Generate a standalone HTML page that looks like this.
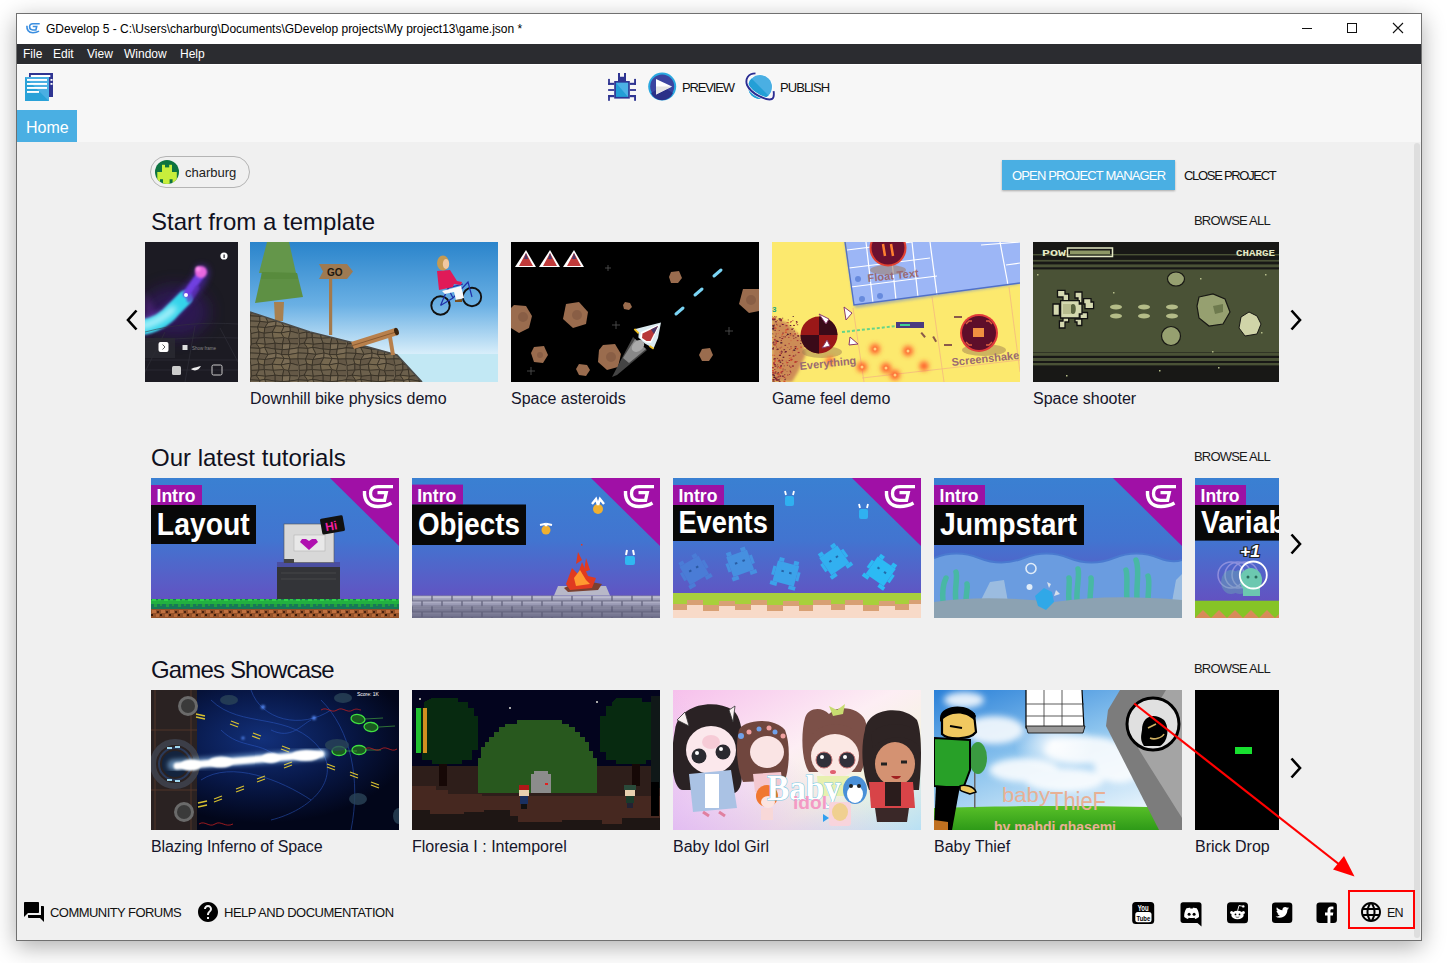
<!DOCTYPE html>
<html><head><meta charset="utf-8">
<style>
*{box-sizing:border-box;margin:0;padding:0}
html,body{width:1454px;height:963px;overflow:hidden;background:#fff;font-family:"Liberation Sans",sans-serif;color:#1a1a2e}
.a{position:absolute}
.t{white-space:nowrap;position:absolute;line-height:1}
.card{position:absolute;overflow:hidden}
.card svg{display:block}
.cap{position:absolute;font-size:16px;white-space:nowrap;color:#15152a;line-height:1}
.h{position:absolute;font-size:24px;white-space:nowrap;color:#101020;line-height:1}
.ba{position:absolute;font-size:13px;letter-spacing:-0.8px;white-space:nowrap;color:#1a1a1a;line-height:1}
.arr{position:absolute}
</style></head><body>
<!-- window frame -->
<div class="a" style="left:16px;top:13px;width:1406px;height:928px;border:1px solid #707070;background:#f0f0f0;box-shadow:0 6px 22px rgba(0,0,0,0.32)"></div>
<!-- title bar -->
<div class="a" style="left:17px;top:14px;width:1404px;height:30px;background:#fff"></div>
<svg class="a" style="left:17px;top:14px" width="30" height="30" viewBox="0 0 30 30"><g transform="translate(9 9) scale(0.45) translate(-211.5 -6.9)" fill="none" stroke="#3a8ee0">
 <path d="M213.5,13 C213,22 217,28.5 227,28.5 C233,28.5 237,27 240.5,25" stroke-width="3.6"/>
 <path d="M242,8.6 L227,8.6 C221,8.6 219.5,12 219.5,15.5 C219.5,20 222,22.3 226.5,22.3 L233.5,22.3 L235.3,14.6 L226.5,14.6" stroke-width="3.5"/>
</g></svg>
<div class="t" style="left:46px;top:23px;font-size:12px;color:#000;letter-spacing:0px">GDevelop 5 - C:\Users\charburg\Documents\GDevelop projects\My project13\game.json *</div>
<div class="a" style="left:1302px;top:28px;width:10px;height:1px;background:#111"></div>
<div class="a" style="left:1347px;top:23px;width:10px;height:10px;border:1px solid #111"></div>
<svg class="a" style="left:1392px;top:22px" width="12" height="12" viewBox="0 0 12 12"><path d="M1,1 L11,11 M11,1 L1,11" stroke="#111" stroke-width="1.1"/></svg>
<!-- menu bar -->
<div class="a" style="left:17px;top:44px;width:1404px;height:20px;background:#2b2c30"></div>
<div class="t" style="left:23px;top:48px;font-size:12px;color:#fff;letter-spacing:0px">File</div>
<div class="t" style="left:53px;top:48px;font-size:12px;color:#fff;letter-spacing:0px">Edit</div>
<div class="t" style="left:87px;top:48px;font-size:12px;color:#fff;letter-spacing:0px">View</div>
<div class="t" style="left:124px;top:48px;font-size:12px;color:#fff;letter-spacing:0px">Window</div>
<div class="t" style="left:180px;top:48px;font-size:12px;color:#fff;letter-spacing:0px">Help</div>
<!-- toolbar -->
<div class="a" style="left:17px;top:64px;width:1404px;height:1px;background:#fff"></div>
<div class="a" style="left:17px;top:65px;width:1404px;height:77px;background:#f7f7f7"></div>
<!-- project manager icon -->
<svg class="a" style="left:24px;top:72px" width="32" height="32" viewBox="0 0 32 32">
 <rect x="5" y="1" width="24" height="24" fill="#2f3592"/>
 <rect x="6.8" y="3" width="19.5" height="2" fill="#fff"/>
 <rect x="26.5" y="7" width="2" height="1.8" fill="#fff"/>
 <rect x="26.5" y="11" width="2" height="1.8" fill="#fff"/>
 <rect x="1" y="5" width="24" height="24" fill="#4aafe3"/>
 <path d="M1,14 L15,29 L1,29 Z M1,5 L25,29 L15,29 L1,14" fill="#239fd6"/>
 <path d="M1,5 L25,29 L1,29 Z" fill="#2aa2d8"/>
 <path d="M1,5 L25,5 L25,29 Z" fill="#4aafe3"/>
 <rect x="3" y="7" width="20" height="1.9" fill="#fff"/>
 <rect x="3" y="11" width="20" height="1.9" fill="#fff"/>
 <rect x="3" y="15" width="20" height="1.9" fill="#fff"/>
 <rect x="3" y="19" width="12" height="1.9" fill="#fff"/>
</svg>
<!-- debug icon -->
<svg class="a" style="left:604px;top:70px" width="36" height="34" viewBox="0 0 36 34">
 <path d="M14,3 H16 V6.8 H20 V3 H22 V11 H14 Z" fill="#2f3592"/>
 <rect x="10.2" y="11" width="15.6" height="17.6" fill="#2f3592"/>
 <path d="M11.9,12.8 H24.1 V26.9 H11.9 Z" fill="#239fd6"/>
 <path d="M11.9,12.8 H24.1 V26.9 Z" fill="#4cb1e5"/>
 <g fill="#2f3592">
  <rect x="4.1" y="12.8" width="6.1" height="2.1"/><rect x="4.1" y="8.9" width="1.8" height="6"/>
  <rect x="4.1" y="19.1" width="6.1" height="1.8"/>
  <rect x="4.1" y="25" width="6.1" height="2.2"/><rect x="4.1" y="25" width="1.8" height="5.8"/>
  <rect x="25.8" y="12.8" width="6.2" height="2.1"/><rect x="30.1" y="8.9" width="1.9" height="6"/>
  <rect x="25.8" y="19.1" width="6.2" height="1.8"/>
  <rect x="25.8" y="25" width="6.2" height="2.2"/><rect x="30.1" y="25" width="1.9" height="5.8"/>
 </g>
</svg>
<!-- preview icon -->
<svg class="a" style="left:646px;top:70px" width="32" height="32" viewBox="0 0 32 32">
 <circle cx="16.2" cy="16.6" r="14" fill="#2aa8e0"/>
 <circle cx="16.2" cy="16.6" r="12" fill="#3b44a0"/>
 <path d="M5,23 A12,12 0 0 0 27,23 L16.2,16.6 Z" fill="#2b3188"/>
 <path d="M10,8.9 L26,16.5 L10,24.6 Z" fill="#fff"/>
 <path d="M10,16.5 L26,16.5 L10,24.6 Z" fill="#e4e4e4"/>
</svg>
<div class="t" style="left:682px;top:81px;font-size:13px;color:#111;letter-spacing:-1.15px">PREVIEW</div>
<!-- publish icon -->
<svg class="a" style="left:740px;top:70px" width="40" height="34" viewBox="0 0 40 34">
 <circle cx="20.1" cy="17" r="12.6" fill="#fff"/>
 <circle cx="20.1" cy="17" r="11.9" fill="#4aafe3"/>
 <path d="M11.6,8.6 A11.9,11.9 0 0 0 28.5,25.4 Z" fill="#239fd6"/>
 <path d="M15.5,3.4 C8,3.6 5,9 7,15 C11,24 27,31 32,29 C34.5,27.5 34,24 33.6,21.2" fill="none" stroke="#fff" stroke-width="3.2"/>
 <path d="M15.5,3.4 C8,3.6 5,9 7,15 C11,24 27,31 32,29 C34.5,27.5 34,24 33.6,21.2" fill="none" stroke="#2b2d92" stroke-width="1.9"/>
</svg>
<div class="t" style="left:780px;top:81px;font-size:13px;color:#111;letter-spacing:-0.9px">PUBLISH</div>
<!-- home tab -->
<div class="a" style="left:17px;top:110px;width:60px;height:32px;background:#4aafe3"></div>
<div class="t" style="left:26px;top:120px;font-size:16px;color:#fff">Home</div>
<!-- content -->
<div class="a" style="left:17px;top:142px;width:1404px;height:798px;background:#f0f0f0"></div>
<div class="a" style="left:1414px;top:143px;width:6px;height:795px;background:#dedede;border-radius:3px"></div>
<!-- chip -->
<div class="a" style="left:150px;top:156px;width:100px;height:32px;border:1px solid #b4b4b4;border-radius:16px"></div>
<svg class="a" style="left:155px;top:160px" width="24" height="24" viewBox="0 0 24 24">
 <defs><clipPath id="avc"><circle cx="12" cy="12" r="12"/></clipPath></defs>
 <circle cx="12" cy="12" r="12" fill="#0e7340"/>
 <g clip-path="url(#avc)" fill="#c8ee3c">
  <rect x="7" y="4.8" width="3" height="4"/><rect x="14.2" y="4.8" width="2.8" height="4"/>
  <rect x="7" y="7.4" width="10" height="5"/><rect x="2.3" y="12" width="19.5" height="7.2"/>
  <rect x="2.3" y="19" width="2.7" height="6"/><rect x="8" y="19" width="6.6" height="6"/><rect x="17.6" y="19" width="4.2" height="6"/>
 </g>
</svg>
<div class="t" style="left:185px;top:166px;font-size:13px;color:#222">charburg</div>
<!-- buttons -->
<div class="a" style="left:1002px;top:160px;width:173px;height:30px;background:#4aafe3;box-shadow:0 1px 2px rgba(0,0,0,0.3)"></div>
<div class="t" style="left:1012px;top:169px;font-size:13px;letter-spacing:-0.85px;color:#fff">OPEN PROJECT MANAGER</div>
<div class="t" style="left:1184px;top:169px;font-size:13px;letter-spacing:-1.3px;color:#111">CLOSE PROJECT</div>
<!-- headings -->
<div class="h" style="left:151px;top:210px">Start from a template</div>
<div class="ba" style="left:1194px;top:214px">BROWSE ALL</div>
<div class="h" style="left:151px;top:446px">Our latest tutorials</div>
<div class="ba" style="left:1194px;top:450px">BROWSE ALL</div>
<div class="h" style="left:151px;top:658px;letter-spacing:-0.85px">Games Showcase</div>
<div class="ba" style="left:1194px;top:662px">BROWSE ALL</div>
<!-- carousel arrows -->
<svg class="arr" style="left:124px;top:308px" width="16" height="24" viewBox="0 0 16 24"><path d="M12.5,2.5 L4,12 L12.5,21.5" fill="none" stroke="#000" stroke-width="2.6"/></svg>
<svg class="arr" style="left:1288px;top:308px" width="16" height="24" viewBox="0 0 16 24"><path d="M3.5,2.5 L12,12 L3.5,21.5" fill="none" stroke="#000" stroke-width="2.6"/></svg>
<svg class="arr" style="left:1288px;top:532px" width="16" height="24" viewBox="0 0 16 24"><path d="M3.5,2.5 L12,12 L3.5,21.5" fill="none" stroke="#000" stroke-width="2.6"/></svg>
<svg class="arr" style="left:1288px;top:756px" width="16" height="24" viewBox="0 0 16 24"><path d="M3.5,2.5 L12,12 L3.5,21.5" fill="none" stroke="#000" stroke-width="2.6"/></svg>
<!-- template card 0 (partial) -->
<div class="card" style="left:145px;top:242px;width:93px;height:140px;background:#1b1a22">
<svg width="93" height="140" viewBox="0 0 93 140">
 <defs>
  <filter id="bl3" x="-50%" y="-50%" width="200%" height="200%"><feGaussianBlur stdDeviation="3"/></filter>
  <filter id="bl6" x="-50%" y="-50%" width="200%" height="200%"><feGaussianBlur stdDeviation="8"/></filter>
  <filter id="bl1" x="-50%" y="-50%" width="200%" height="200%"><feGaussianBlur stdDeviation="1.2"/></filter>
 </defs>
 <rect width="93" height="140" fill="#1c1b23"/>
 <ellipse cx="30" cy="70" rx="34" ry="26" fill="#3a1478" opacity="0.55" filter="url(#bl6)"/>
 <path d="M0,50 L12,72 L0,100 Z" fill="#6a2aa0" opacity="0.45" filter="url(#bl3)"/>
 <g stroke-linecap="round" fill="none">
  <path d="M-4,84 C10,82 22,74 30,66 C36,60 42,52 50,44 C54,40 56,36 57,30" stroke="#5a2ad0" stroke-width="14" opacity="0.55" filter="url(#bl3)"/>
  <path d="M-6,86 C8,84 20,78 28,68 C33,63 36,60 40,56" stroke="#34d4ea" stroke-width="15" filter="url(#bl1)"/>
  <path d="M-2,84 C10,81 20,75 28,67" stroke="#c8f8ff" stroke-width="6" filter="url(#bl3)"/>
  <path d="M42,52 C46,46 50,40 54,35" stroke="#7040e0" stroke-width="8" filter="url(#bl1)"/>
  <path d="M44,58 C48,54 50,50 52,46" stroke="#6030c0" stroke-width="5" opacity="0.7" filter="url(#bl1)"/>
 </g>
 <ellipse cx="56" cy="30" rx="6" ry="6" fill="#e868e0" filter="url(#bl1)"/>
 <circle cx="53" cy="27" r="2.5" fill="#ff90f0" filter="url(#bl1)"/>
 <circle cx="41" cy="53" r="2" fill="#fff"/>
 <circle cx="79" cy="14" r="3.6" fill="#fff"/>
 <rect x="78.5" y="12.5" width="1.2" height="3.5" fill="#1c1b23"/>
 <g stroke="#34343e" stroke-width="0.7" fill="none" opacity="0.8">
  <path d="M0,90 C30,82 60,80 93,82"/><path d="M0,100 C30,96 60,95 93,96"/><path d="M0,118 L93,118"/><path d="M0,128 L93,128"/>
  <path d="M20,90 L-5,140"/><path d="M50,84 L40,140"/><path d="M75,86 L93,120"/>
 </g>
 <rect x="0" y="96" width="30" height="20" fill="#2a2a32" opacity="0.8"/>
 <rect x="13.5" y="100" width="10" height="10" rx="2" fill="#fff"/>
 <path d="M17.5,102.5 L20,105 L17.5,107.5" stroke="#333" stroke-width="0.8" fill="none"/>
 <rect x="37.5" y="103" width="5" height="5" fill="#ddd"/>
 <text x="47" y="107.5" font-size="4.5" fill="#888" font-family="Liberation Sans">Show frame</text>
 <rect x="27" y="124" width="9" height="9" rx="1.5" fill="#ccc"/>
 <path d="M46,127 C50,130 54,128 56,124 C53,125 50,125 46,127 Z" fill="#eee"/>
 <rect x="67" y="123" width="10" height="10" rx="1.5" fill="none" stroke="#ccc" stroke-width="1"/>
</svg></div>

<!-- template card 1: downhill bike -->
<div class="card" style="left:250px;top:242px;width:248px;height:140px">
<svg width="248" height="140" viewBox="0 0 248 140">
 <defs>
  <linearGradient id="sky1" x1="0" y1="0" x2="0" y2="1"><stop offset="0" stop-color="#2a84cb"/><stop offset="0.45" stop-color="#6ab0e4"/><stop offset="0.8" stop-color="#d8eefa"/><stop offset="1" stop-color="#e8f6fc"/></linearGradient>
  <pattern id="rock" width="48" height="32" patternUnits="userSpaceOnUse"><rect width="48" height="32" fill="#6a5e4c"/><path d="M1.2,0.5 L8.9,0.1 L6.2,5.2 L1.6,6.1 Z" fill="#645846" stroke="#2e281e" stroke-width="0.7"/><path d="M1.6,6.1 L6.2,5.2 L9.8,10.4 L0.1,9.9 Z" fill="#645846" stroke="#2e281e" stroke-width="0.7"/><path d="M0.1,9.9 L9.8,10.4 L10.0,15.4 L0.1,15.0 Z" fill="#6c604c" stroke="#2e281e" stroke-width="0.7"/><path d="M0.1,15.0 L10.0,15.4 L7.6,21.1 L-0.2,20.9 Z" fill="#6c604c" stroke="#2e281e" stroke-width="0.7"/><path d="M-0.2,20.9 L7.6,21.1 L8.9,25.9 L1.1,27.6 Z" fill="#6c604c" stroke="#2e281e" stroke-width="0.7"/><path d="M1.1,27.6 L8.9,25.9 L8.9,31.9 L1.2,32.3 Z" fill="#6c604c" stroke="#2e281e" stroke-width="0.7"/><path d="M8.9,0.1 L14.3,-0.4 L15.4,6.3 L6.2,5.2 Z" fill="#6c604c" stroke="#2e281e" stroke-width="0.7"/><path d="M6.2,5.2 L15.4,6.3 L14.7,9.4 L9.8,10.4 Z" fill="#76684f" stroke="#2e281e" stroke-width="0.7"/><path d="M9.8,10.4 L14.7,9.4 L18.2,16.4 L10.0,15.4 Z" fill="#7a6c55" stroke="#2e281e" stroke-width="0.7"/><path d="M10.0,15.4 L18.2,16.4 L14.9,21.5 L7.6,21.1 Z" fill="#645846" stroke="#2e281e" stroke-width="0.7"/><path d="M7.6,21.1 L14.9,21.5 L14.2,27.3 L8.9,25.9 Z" fill="#76684f" stroke="#2e281e" stroke-width="0.7"/><path d="M8.9,25.9 L14.2,27.3 L14.3,31.4 L8.9,31.9 Z" fill="#645846" stroke="#2e281e" stroke-width="0.7"/><path d="M14.3,-0.4 L23.3,0.3 L25.2,5.2 L15.4,6.3 Z" fill="#6c604c" stroke="#2e281e" stroke-width="0.7"/><path d="M15.4,6.3 L25.2,5.2 L25.2,11.1 L14.7,9.4 Z" fill="#645846" stroke="#2e281e" stroke-width="0.7"/><path d="M14.7,9.4 L25.2,11.1 L26.2,15.1 L18.2,16.4 Z" fill="#6c604c" stroke="#2e281e" stroke-width="0.7"/><path d="M18.2,16.4 L26.2,15.1 L25.7,19.9 L14.9,21.5 Z" fill="#7a6c55" stroke="#2e281e" stroke-width="0.7"/><path d="M14.9,21.5 L25.7,19.9 L22.3,26.2 L14.2,27.3 Z" fill="#645846" stroke="#2e281e" stroke-width="0.7"/><path d="M14.2,27.3 L22.3,26.2 L23.3,32.1 L14.3,31.4 Z" fill="#6c604c" stroke="#2e281e" stroke-width="0.7"/><path d="M23.3,0.3 L33.8,-0.4 L32.6,5.9 L25.2,5.2 Z" fill="#6c604c" stroke="#2e281e" stroke-width="0.7"/><path d="M25.2,5.2 L32.6,5.9 L32.3,11.6 L25.2,11.1 Z" fill="#645846" stroke="#2e281e" stroke-width="0.7"/><path d="M25.2,11.1 L32.3,11.6 L31.5,16.5 L26.2,15.1 Z" fill="#6c604c" stroke="#2e281e" stroke-width="0.7"/><path d="M26.2,15.1 L31.5,16.5 L34.1,20.4 L25.7,19.9 Z" fill="#7a6c55" stroke="#2e281e" stroke-width="0.7"/><path d="M25.7,19.9 L34.1,20.4 L31.2,26.9 L22.3,26.2 Z" fill="#76684f" stroke="#2e281e" stroke-width="0.7"/><path d="M22.3,26.2 L31.2,26.9 L33.8,31.4 L23.3,32.1 Z" fill="#76684f" stroke="#2e281e" stroke-width="0.7"/><path d="M33.8,-0.4 L38.6,0.7 L40.2,5.6 L32.6,5.9 Z" fill="#645846" stroke="#2e281e" stroke-width="0.7"/><path d="M32.6,5.9 L40.2,5.6 L39.3,11.2 L32.3,11.6 Z" fill="#7a6c55" stroke="#2e281e" stroke-width="0.7"/><path d="M32.3,11.6 L39.3,11.2 L38.5,16.7 L31.5,16.5 Z" fill="#645846" stroke="#2e281e" stroke-width="0.7"/><path d="M31.5,16.5 L38.5,16.7 L40.0,21.1 L34.1,20.4 Z" fill="#76684f" stroke="#2e281e" stroke-width="0.7"/><path d="M34.1,20.4 L40.0,21.1 L40.4,25.2 L31.2,26.9 Z" fill="#7a6c55" stroke="#2e281e" stroke-width="0.7"/><path d="M31.2,26.9 L40.4,25.2 L38.6,32.5 L33.8,31.4 Z" fill="#76684f" stroke="#2e281e" stroke-width="0.7"/><path d="M38.6,0.7 L49.2,0.5 L49.6,6.1 L40.2,5.6 Z" fill="#645846" stroke="#2e281e" stroke-width="0.7"/><path d="M40.2,5.6 L49.6,6.1 L48.1,9.9 L39.3,11.2 Z" fill="#6c604c" stroke="#2e281e" stroke-width="0.7"/><path d="M39.3,11.2 L48.1,9.9 L48.1,15.0 L38.5,16.7 Z" fill="#7a6c55" stroke="#2e281e" stroke-width="0.7"/><path d="M38.5,16.7 L48.1,15.0 L47.8,20.9 L40.0,21.1 Z" fill="#76684f" stroke="#2e281e" stroke-width="0.7"/><path d="M40.0,21.1 L47.8,20.9 L49.1,27.6 L40.4,25.2 Z" fill="#645846" stroke="#2e281e" stroke-width="0.7"/><path d="M40.4,25.2 L49.1,27.6 L49.2,32.3 L38.6,32.5 Z" fill="#6c604c" stroke="#2e281e" stroke-width="0.7"/></pattern>
 </defs>
 <rect width="248" height="140" fill="url(#sky1)"/>
 <rect x="140" y="112" width="108" height="28" fill="#c2e8f4"/>
 <!-- tree -->
 <path d="M24,60 L34,60 L33,79 L25,79 Z" fill="#a88050"/>
 <path d="M17,0 L39,0 L46,31 L9,31 Z" fill="#64964a"/>
 <path d="M12,30 L47,31 L53,55 L5,61 Z" fill="#5e9044"/>
 <path d="M12,30 L47,31 L48,37 L11,37 Z" fill="#558838" opacity="0.6"/>
 <!-- ground -->
 <path d="M0,70 L60,90 L100,100 L147,113 L172,140 L0,140 Z" fill="url(#rock)"/>
 <path d="M0,70 L60,90 L100,100 L147,113 L172,140" stroke="#4a4a48" stroke-width="1.5" fill="none"/>
 <!-- sign -->
 <rect x="79" y="36" width="3.2" height="57" fill="#a47a4c"/>
 <path d="M69,22 L97,22 L103,29.5 L97,37 L69,37 L73,29.5 Z" fill="#9e7a52"/>
 <text x="77" y="34" font-size="10" font-weight="bold" fill="#201810" font-family="Liberation Sans">GO</text>
 <!-- log -->
 <path d="M101,100 L145,86 L148,93 L104,107 Z" fill="#b8804c"/>
 <path d="M101,104 L146,90" stroke="#8a5a30" stroke-width="1" />
 <ellipse cx="146.5" cy="89.5" rx="2.2" ry="3.8" fill="#3a2410" transform="rotate(-18 146.5 89.5)"/>
 <path d="M138,95 L142,95 L145,113 L141,113 Z" fill="#b8804c"/>
 <!-- bike -->
 <g fill="none" stroke="#111" stroke-width="1.9">
  <circle cx="190.5" cy="63.5" r="9.2"/><circle cx="222" cy="55" r="9.2"/>
 </g>
 <g fill="none" stroke="#2030a8" stroke-width="1.2">
  <path d="M190.5,63.5 L203,56 L218,40 L222,55 M203,56 L198,46 L213,42 M190.5,63.5 L198,46"/>
 </g>
 <path d="M192,49 L211,44 L214,56 L206,58 L204,50 L195,52 Z" fill="#fafafa"/>
 <path d="M187,29 L200,28 L207,39 L212,40 L211,43 L204,42 L203,45 L189,48 Z" fill="#e01a58"/>
 <path d="M205,58 L212,57 L212,60 L205,60 Z" fill="#7a5020"/>
 <ellipse cx="193" cy="21" rx="6" ry="7.5" fill="#c49a52"/>
 <ellipse cx="196" cy="22" rx="3.2" ry="5" fill="#f0c8a0"/>
</svg></div>

<!-- template card 2: space asteroids -->
<div class="card" style="left:511px;top:242px;width:248px;height:140px;background:#000">
<svg width="248" height="140" viewBox="0 0 248 140">
 <rect width="248" height="140" fill="#000"/>
 <g fill="#9a6c4e">
  <path d="M3,63 L15,64 L21,74 L18,86 L8,91 L0,86 L0,66 Z"/>
  <path d="M55,62 L68,60 L77,70 L75,82 L62,86 L52,77 Z"/>
  <path d="M23,105 L33,104 L37,113 L32,121 L23,120 L20,111 Z"/>
  <path d="M68,122 L76,123 L79,128 L75,134 L68,133 L65,127 Z"/>
  <path d="M92,103 L104,102 L110,112 L107,125 L96,128 L87,120 L88,108 Z"/>
  <path d="M114,60 L119,61 L121,65 L118,68 L113,67 L112,63 Z"/>
  <path d="M160,30 L168,29 L171,36 L167,41 L160,41 L158,35 Z"/>
  <path d="M232,47 L248,47 L248,69 L238,71 L228,62 Z"/>
  <path d="M191,107 L199,106 L202,113 L198,119 L191,119 L188,113 Z"/>
 </g>
 <g fill="#7e5640" opacity="0.6">
  <circle cx="12" cy="75" r="5"/><circle cx="66" cy="73" r="5"/><circle cx="100" cy="115" r="5"/><circle cx="240" cy="58" r="5"/><circle cx="29" cy="113" r="3"/>
 </g>
 <g stroke="#555" stroke-width="0.8">
  <path d="M94,26 L100,26 M97,23 L97,29"/><path d="M101,83 L109,83 M105,79 L105,87"/><path d="M214,89 L222,89 M218,85 L218,93"/><path d="M16,129 L24,129 M20,125 L20,133"/>
 </g>
 <g>
  <path d="M15,8 L25,25 L4,25 Z" fill="#fff"/><path d="M15,11 L22,24 L8,24 Z" fill="#c03a3a"/><path d="M15,11 L17,17 L13,17 Z" fill="#4a3868"/>
  <path d="M39,8 L49,25 L28,25 Z" fill="#fff"/><path d="M39,11 L46,24 L32,24 Z" fill="#c03a3a"/><path d="M39,11 L41,17 L37,17 Z" fill="#4a3868"/>
  <path d="M63,8 L73,25 L52,25 Z" fill="#fff"/><path d="M63,11 L70,24 L56,24 Z" fill="#c03a3a"/><path d="M63,11 L65,17 L61,17 Z" fill="#4a3868"/>
 </g>
 <g stroke="#7ad4f4" stroke-width="3" stroke-linecap="round">
  <path d="M165,72 L172,66"/><path d="M184,53 L191,47"/><path d="M203,34 L210,28"/>
 </g>
 <path d="M122,95 L136,108 L106,133 L101,135 Z" fill="#444"/>
 <path d="M124,97 L135,107 L118,121 L112,116 Z" fill="#888"/>
 <ellipse cx="127" cy="104" rx="7" ry="5" transform="rotate(-40 127 104)" fill="#aaa"/>
 <path d="M150,80.4 L123.4,87.3 L127.7,91.3 L127.4,95.6 L133.9,101.5 L142.6,106.5 L147,96 Z" fill="#dbeaf0"/>
 <path d="M149,82 L130,90 L129,96 L135,100.5 L140,101 Z" fill="#fff"/>
 <path d="M147,84 L131.5,91.5 L131,96 L135.5,99 L139.5,99 Z" fill="#b83838"/>
 <path d="M147,84 L140,87.5 L143,92 Z" fill="#4a3868"/>
 <path d="M123.4,87 L127.7,91.3 M138.5,104 L142.6,106.8" stroke="#f0c020" stroke-width="1.8"/>
</svg></div>

<!-- template card 3: game feel -->
<div class="card" style="left:772px;top:242px;width:248px;height:140px;background:#fbe86c">
<svg width="248" height="140" viewBox="0 0 248 140">
 <defs>
  <filter id="gfb" x="-50%" y="-50%" width="200%" height="200%"><feGaussianBlur stdDeviation="1.6"/></filter>
  <filter id="gfb2" x="-50%" y="-50%" width="200%" height="200%"><feGaussianBlur stdDeviation="2.5"/></filter>
 </defs>
 <rect width="248" height="140" fill="#fce96e"/>
 <g stroke="#f4b880" stroke-width="0.8" fill="none">
  <path d="M81,66 L92,140"/><path d="M160,55 L172,140"/><path d="M237,45 L248,130"/><path d="M90,136 L248,118"/>
 </g>
 <path d="M73,0 L248,0 L248,42 L83,66 Z" fill="#5a7ad8" opacity="0.5" filter="url(#gfb)"/>
 <path d="M74,0 L248,0 L248,41 L82,63 Z" fill="#9cb6f6"/>
 <g stroke="#fff" stroke-width="1.2" fill="none">
  <path d="M75,8 L140,0"/><path d="M77,26 L158,16"/><path d="M79,45 L165,34"/><path d="M209,3 L248,0"/><path d="M234,23 L248,21"/>
  <path d="M94,0 L101,61"/><path d="M118,0 L124,58"/><path d="M140,0 L146,55"/><path d="M158,0 L165,53"/><path d="M228,0 L236,43"/>
 </g>
 <path d="M73,0 L82,63 L248,41" stroke="#5070c8" stroke-width="1.4" fill="none"/>
 <g fill="#5a80d8" opacity="0.8"><circle cx="86" cy="37" r="3"/><circle cx="90" cy="57" r="3"/><circle cx="108" cy="54" r="3"/></g>
 <!-- particles left -->
 <path d="M0,76 L14,80 L30,96 L34,112 L26,130 L20,140 L0,140 Z" fill="#a03040" opacity="0.5" filter="url(#gfb)"/>
 <g opacity="0.95"><rect x="12.8" y="89.7" width="2.0" height="1.2" fill="#d84a30"/><rect x="15.4" y="105.3" width="0.8" height="0.5" fill="#8a2030"/><rect x="2.9" y="129.3" width="1.0" height="0.7" fill="#6a1434"/><rect x="10.0" y="121.3" width="1.4" height="0.9" fill="#8a2030"/><rect x="1.9" y="116.2" width="1.9" height="1.2" fill="#6a1434"/><rect x="20.4" y="108.5" width="1.0" height="0.6" fill="#a82a34"/><rect x="0.2" y="137.2" width="1.9" height="1.2" fill="#a82a34"/><rect x="15.1" y="91.8" width="1.7" height="1.1" fill="#3e0c2a"/><rect x="4.3" y="134.8" width="1.4" height="0.9" fill="#8a2030"/><rect x="12.8" y="135.7" width="0.8" height="0.5" fill="#a82a34"/><rect x="4.8" y="106.7" width="1.8" height="1.1" fill="#3e0c2a"/><rect x="5.5" y="130.4" width="1.5" height="1.0" fill="#3e0c2a"/><rect x="8.7" y="109.3" width="2.0" height="1.2" fill="#6a1434"/><rect x="22.6" y="119.0" width="2.1" height="1.3" fill="#d84a30"/><rect x="2.0" y="118.3" width="2.0" height="1.3" fill="#d84a30"/><rect x="7.5" y="133.7" width="1.6" height="1.0" fill="#6a1434"/><rect x="2.1" y="139.2" width="0.9" height="0.6" fill="#a82a34"/><rect x="18.2" y="130.4" width="1.2" height="0.8" fill="#a82a34"/><rect x="20.2" y="78.4" width="1.2" height="0.7" fill="#a82a34"/><rect x="17.9" y="124.7" width="1.6" height="1.0" fill="#a82a34"/><rect x="5.6" y="124.3" width="1.2" height="0.8" fill="#8a2030"/><rect x="17.0" y="132.1" width="1.1" height="0.7" fill="#8a2030"/><rect x="0.0" y="76.4" width="1.6" height="1.0" fill="#a82a34"/><rect x="2.3" y="76.1" width="1.2" height="0.7" fill="#3e0c2a"/><rect x="18.4" y="91.4" width="1.2" height="0.8" fill="#d84a30"/><rect x="12.4" y="137.3" width="1.3" height="0.8" fill="#3e0c2a"/><rect x="4.7" y="131.4" width="1.7" height="1.0" fill="#8a2030"/><rect x="23.9" y="80.8" width="1.1" height="0.7" fill="#8a2030"/><rect x="16.8" y="115.9" width="1.4" height="0.8" fill="#d84a30"/><rect x="5.8" y="91.0" width="0.8" height="0.5" fill="#d84a30"/><rect x="16.4" y="101.4" width="1.3" height="0.8" fill="#a82a34"/><rect x="1.7" y="112.9" width="1.4" height="0.9" fill="#d84a30"/><rect x="5.8" y="118.8" width="1.7" height="1.1" fill="#d84a30"/><rect x="0.4" y="75.5" width="2.0" height="1.3" fill="#a82a34"/><rect x="10.2" y="90.6" width="1.6" height="1.0" fill="#8a2030"/><rect x="2.6" y="85.7" width="1.9" height="1.2" fill="#d84a30"/><rect x="22.2" y="91.4" width="1.8" height="1.1" fill="#a82a34"/><rect x="10.0" y="75.8" width="1.2" height="0.7" fill="#6a1434"/><rect x="21.7" y="88.7" width="1.2" height="0.8" fill="#6a1434"/><rect x="13.8" y="118.8" width="0.9" height="0.6" fill="#a82a34"/><rect x="7.2" y="95.2" width="1.4" height="0.9" fill="#6a1434"/><rect x="1.5" y="130.5" width="1.7" height="1.1" fill="#d84a30"/><rect x="13.3" y="88.4" width="1.1" height="0.7" fill="#d84a30"/><rect x="10.5" y="82.0" width="1.2" height="0.8" fill="#6a1434"/><rect x="8.8" y="129.2" width="1.2" height="0.8" fill="#d84a30"/><rect x="0.6" y="128.6" width="1.2" height="0.8" fill="#8a2030"/><rect x="4.6" y="82.6" width="1.4" height="0.9" fill="#d84a30"/><rect x="4.8" y="115.9" width="1.3" height="0.8" fill="#8a2030"/><rect x="1.2" y="134.8" width="1.4" height="0.9" fill="#a82a34"/><rect x="9.9" y="128.9" width="1.4" height="0.8" fill="#8a2030"/><rect x="13.3" y="136.7" width="0.8" height="0.5" fill="#6a1434"/><rect x="22.6" y="104.1" width="2.0" height="1.3" fill="#8a2030"/><rect x="25.7" y="109.9" width="1.9" height="1.2" fill="#a82a34"/><rect x="0.7" y="138.1" width="0.9" height="0.5" fill="#6a1434"/><rect x="9.9" y="133.6" width="1.9" height="1.2" fill="#6a1434"/><rect x="7.7" y="133.4" width="1.4" height="0.9" fill="#a82a34"/><rect x="9.8" y="82.0" width="1.6" height="1.0" fill="#6a1434"/><rect x="9.0" y="108.6" width="0.9" height="0.6" fill="#8a2030"/><rect x="24.8" y="82.3" width="1.4" height="0.9" fill="#8a2030"/><rect x="4.9" y="125.6" width="1.0" height="0.6" fill="#6a1434"/><rect x="0.9" y="132.6" width="1.8" height="1.1" fill="#6a1434"/><rect x="11.7" y="134.8" width="1.4" height="0.9" fill="#a82a34"/><rect x="8.1" y="111.7" width="1.1" height="0.7" fill="#d84a30"/><rect x="11.0" y="114.8" width="1.4" height="0.9" fill="#a82a34"/><rect x="0.0" y="125.2" width="1.8" height="1.1" fill="#a82a34"/><rect x="0.3" y="77.0" width="2.0" height="1.3" fill="#3e0c2a"/><rect x="0.6" y="130.4" width="1.4" height="0.9" fill="#8a2030"/><rect x="0.7" y="84.4" width="1.6" height="1.0" fill="#3e0c2a"/><rect x="6.9" y="112.7" width="2.1" height="1.3" fill="#6a1434"/><rect x="1.9" y="102.3" width="1.7" height="1.1" fill="#a82a34"/><rect x="1.0" y="99.1" width="0.9" height="0.5" fill="#6a1434"/><rect x="18.3" y="104.4" width="1.3" height="0.8" fill="#8a2030"/><rect x="10.6" y="126.9" width="0.9" height="0.5" fill="#3e0c2a"/><rect x="18.5" y="115.4" width="1.3" height="0.8" fill="#d84a30"/><rect x="8.3" y="119.8" width="1.1" height="0.7" fill="#6a1434"/><rect x="14.9" y="91.8" width="1.1" height="0.7" fill="#3e0c2a"/><rect x="0.2" y="82.6" width="1.3" height="0.8" fill="#d84a30"/><rect x="12.1" y="133.3" width="1.0" height="0.6" fill="#d84a30"/><rect x="22.6" y="119.6" width="1.8" height="1.1" fill="#8a2030"/><rect x="16.6" y="118.1" width="1.5" height="0.9" fill="#8a2030"/><rect x="12.6" y="127.6" width="1.0" height="0.6" fill="#3e0c2a"/><rect x="0.3" y="125.1" width="1.5" height="1.0" fill="#a82a34"/><rect x="6.6" y="117.5" width="1.2" height="0.8" fill="#a82a34"/><rect x="0.1" y="130.3" width="1.7" height="1.0" fill="#a82a34"/><rect x="17.9" y="129.2" width="1.2" height="0.7" fill="#8a2030"/><rect x="24.2" y="79.9" width="1.5" height="0.9" fill="#8a2030"/><rect x="1.0" y="121.2" width="2.0" height="1.2" fill="#a82a34"/><rect x="4.8" y="78.0" width="1.0" height="0.6" fill="#8a2030"/><rect x="23.9" y="79.1" width="1.4" height="0.9" fill="#6a1434"/><rect x="22.4" y="120.2" width="1.3" height="0.8" fill="#d84a30"/><rect x="8.3" y="100.2" width="2.0" height="1.3" fill="#3e0c2a"/><rect x="4.7" y="98.8" width="1.9" height="1.2" fill="#3e0c2a"/><rect x="4.1" y="137.8" width="1.8" height="1.1" fill="#8a2030"/><rect x="10.1" y="118.5" width="1.0" height="0.6" fill="#3e0c2a"/><rect x="30.2" y="100.5" width="0.9" height="0.6" fill="#6a1434"/><rect x="19.9" y="123.4" width="2.0" height="1.3" fill="#8a2030"/><rect x="23.1" y="112.7" width="1.1" height="0.7" fill="#6a1434"/><rect x="13.5" y="87.1" width="2.0" height="1.2" fill="#d84a30"/><rect x="7.8" y="130.2" width="1.7" height="1.0" fill="#d84a30"/><rect x="8.9" y="130.4" width="1.5" height="1.0" fill="#8a2030"/><rect x="3.7" y="91.6" width="1.1" height="0.7" fill="#a82a34"/><rect x="2.1" y="127.1" width="1.3" height="0.8" fill="#8a2030"/><rect x="23.2" y="95.3" width="1.3" height="0.8" fill="#6a1434"/><rect x="14.9" y="120.0" width="1.4" height="0.9" fill="#6a1434"/><rect x="14.6" y="129.1" width="0.8" height="0.5" fill="#8a2030"/><rect x="0.3" y="139.5" width="1.8" height="1.1" fill="#3e0c2a"/><rect x="0.2" y="132.2" width="1.9" height="1.2" fill="#6a1434"/><rect x="18.5" y="116.8" width="2.0" height="1.3" fill="#a82a34"/><rect x="2.5" y="130.4" width="1.8" height="1.1" fill="#6a1434"/><rect x="13.5" y="83.1" width="2.0" height="1.2" fill="#a82a34"/><rect x="25.1" y="90.8" width="1.0" height="0.6" fill="#d84a30"/><rect x="17.9" y="80.0" width="0.9" height="0.6" fill="#a82a34"/><rect x="3.4" y="129.0" width="1.4" height="0.9" fill="#d84a30"/><rect x="5.0" y="122.5" width="1.2" height="0.8" fill="#a82a34"/><rect x="12.5" y="102.8" width="1.6" height="1.0" fill="#6a1434"/><rect x="8.4" y="123.0" width="1.5" height="0.9" fill="#6a1434"/><rect x="4.2" y="81.9" width="0.9" height="0.6" fill="#3e0c2a"/><rect x="15.0" y="132.6" width="1.5" height="0.9" fill="#a82a34"/><rect x="14.1" y="120.2" width="1.8" height="1.1" fill="#d84a30"/><rect x="18.6" y="93.5" width="0.9" height="0.6" fill="#d84a30"/><rect x="3.3" y="136.3" width="1.5" height="0.9" fill="#8a2030"/><rect x="9.4" y="81.5" width="0.9" height="0.5" fill="#d84a30"/><rect x="20.6" y="93.4" width="1.6" height="1.0" fill="#6a1434"/><rect x="1.6" y="122.2" width="1.9" height="1.2" fill="#d84a30"/><rect x="1.4" y="117.3" width="1.0" height="0.6" fill="#8a2030"/><rect x="21.2" y="95.9" width="1.3" height="0.8" fill="#8a2030"/><rect x="3.1" y="93.8" width="1.2" height="0.7" fill="#3e0c2a"/><rect x="0.7" y="85.6" width="1.8" height="1.1" fill="#6a1434"/><rect x="19.9" y="109.8" width="0.9" height="0.6" fill="#d84a30"/><rect x="0.5" y="91.9" width="0.9" height="0.5" fill="#6a1434"/><rect x="4.5" y="107.3" width="1.3" height="0.8" fill="#8a2030"/><rect x="9.4" y="96.0" width="1.8" height="1.1" fill="#8a2030"/><rect x="8.9" y="78.6" width="1.0" height="0.6" fill="#a82a34"/><rect x="16.7" y="112.9" width="1.8" height="1.1" fill="#8a2030"/><rect x="2.2" y="122.0" width="1.5" height="1.0" fill="#6a1434"/><rect x="6.8" y="118.2" width="1.6" height="1.0" fill="#6a1434"/><rect x="7.3" y="83.7" width="1.5" height="0.9" fill="#6a1434"/><rect x="2.5" y="85.2" width="1.3" height="0.8" fill="#d84a30"/><rect x="25.3" y="93.3" width="1.9" height="1.2" fill="#3e0c2a"/><rect x="3.9" y="136.7" width="2.0" height="1.2" fill="#8a2030"/><rect x="12.3" y="94.4" width="1.7" height="1.0" fill="#8a2030"/><rect x="26.2" y="93.8" width="0.8" height="0.5" fill="#3e0c2a"/><rect x="14.9" y="86.6" width="1.8" height="1.1" fill="#a82a34"/><rect x="9.5" y="117.7" width="1.6" height="1.0" fill="#8a2030"/><rect x="20.2" y="87.1" width="0.8" height="0.5" fill="#6a1434"/><rect x="17.3" y="107.0" width="0.9" height="0.6" fill="#3e0c2a"/><rect x="17.7" y="92.7" width="1.0" height="0.6" fill="#6a1434"/><rect x="10.7" y="126.3" width="0.8" height="0.5" fill="#a82a34"/><rect x="10.6" y="114.8" width="1.5" height="0.9" fill="#3e0c2a"/><rect x="3.2" y="135.4" width="1.7" height="1.1" fill="#d84a30"/><rect x="21.1" y="82.9" width="1.8" height="1.1" fill="#8a2030"/><rect x="0.6" y="76.2" width="2.1" height="1.3" fill="#d84a30"/><rect x="0.6" y="87.5" width="1.4" height="0.8" fill="#6a1434"/><rect x="8.0" y="124.0" width="1.8" height="1.1" fill="#a82a34"/><rect x="28.0" y="101.0" width="1.3" height="0.8" fill="#6a1434"/><rect x="0.8" y="105.2" width="1.1" height="0.7" fill="#3e0c2a"/><rect x="0.2" y="106.3" width="1.8" height="1.1" fill="#3e0c2a"/><rect x="3.3" y="100.5" width="1.7" height="1.1" fill="#a82a34"/><rect x="8.7" y="98.2" width="1.3" height="0.8" fill="#8a2030"/><rect x="34.2" y="100.5" width="1.1" height="0.7" fill="#6a1434"/><rect x="28.2" y="98.4" width="1.0" height="0.7" fill="#8a2030"/><rect x="2.4" y="87.8" width="1.4" height="0.9" fill="#3e0c2a"/><rect x="1.7" y="116.0" width="1.0" height="0.6" fill="#8a2030"/><rect x="0.6" y="106.4" width="1.3" height="0.8" fill="#a82a34"/><rect x="0.3" y="95.0" width="1.1" height="0.7" fill="#a82a34"/><rect x="8.4" y="76.6" width="1.1" height="0.7" fill="#6a1434"/><rect x="3.5" y="99.7" width="1.6" height="1.0" fill="#d84a30"/><rect x="1.8" y="96.9" width="1.8" height="1.1" fill="#a82a34"/><rect x="31.2" y="93.2" width="1.8" height="1.1" fill="#3e0c2a"/><rect x="5.3" y="137.5" width="1.1" height="0.7" fill="#8a2030"/><rect x="10.4" y="127.8" width="1.2" height="0.8" fill="#d84a30"/><rect x="7.2" y="77.7" width="1.6" height="1.0" fill="#a82a34"/><rect x="0.2" y="74.2" width="0.8" height="0.5" fill="#a82a34"/><rect x="11.5" y="107.2" width="1.6" height="1.0" fill="#6a1434"/><rect x="1.8" y="133.4" width="1.2" height="0.8" fill="#3e0c2a"/><rect x="7.6" y="105.6" width="1.3" height="0.8" fill="#a82a34"/><rect x="11.7" y="123.6" width="0.9" height="0.6" fill="#3e0c2a"/><rect x="25.6" y="93.4" width="1.4" height="0.9" fill="#a82a34"/><rect x="12.6" y="110.1" width="1.0" height="0.6" fill="#3e0c2a"/><rect x="14.8" y="122.8" width="1.3" height="0.8" fill="#8a2030"/><rect x="20.5" y="86.1" width="1.1" height="0.7" fill="#3e0c2a"/><rect x="7.6" y="125.4" width="1.9" height="1.2" fill="#d84a30"/><rect x="21.3" y="107.5" width="2.0" height="1.3" fill="#3e0c2a"/><rect x="1.9" y="76.8" width="1.9" height="1.2" fill="#a82a34"/><rect x="14.6" y="80.1" width="1.2" height="0.8" fill="#a82a34"/><rect x="20.6" y="113.6" width="1.9" height="1.2" fill="#a82a34"/><rect x="5.8" y="131.6" width="2.1" height="1.3" fill="#d84a30"/><rect x="2.1" y="74.1" width="1.2" height="0.8" fill="#a82a34"/><rect x="10.8" y="94.5" width="1.1" height="0.7" fill="#6a1434"/><rect x="1.6" y="77.2" width="1.5" height="1.0" fill="#6a1434"/><rect x="2.7" y="74.8" width="1.1" height="0.7" fill="#6a1434"/><rect x="8.8" y="111.1" width="1.2" height="0.8" fill="#8a2030"/><rect x="12.3" y="132.3" width="1.0" height="0.6" fill="#3e0c2a"/><rect x="18.3" y="79.2" width="1.6" height="1.0" fill="#a82a34"/><rect x="0.7" y="130.7" width="0.9" height="0.6" fill="#d84a30"/><rect x="4.1" y="104.7" width="0.9" height="0.6" fill="#8a2030"/><rect x="18.5" y="106.0" width="1.3" height="0.8" fill="#d84a30"/><rect x="18.2" y="117.6" width="1.9" height="1.2" fill="#d84a30"/><rect x="21.3" y="113.2" width="0.9" height="0.6" fill="#6a1434"/><rect x="3.9" y="74.5" width="1.2" height="0.8" fill="#a82a34"/><rect x="19.0" y="86.7" width="1.7" height="1.0" fill="#8a2030"/><rect x="24.8" y="98.1" width="1.6" height="1.0" fill="#a82a34"/><rect x="6.7" y="88.1" width="1.2" height="0.8" fill="#a82a34"/><rect x="1.1" y="102.4" width="1.2" height="0.8" fill="#6a1434"/><rect x="2.5" y="123.5" width="1.9" height="1.2" fill="#6a1434"/><rect x="6.7" y="139.1" width="1.9" height="1.2" fill="#8a2030"/><rect x="3.5" y="98.3" width="2.0" height="1.3" fill="#8a2030"/><rect x="22.7" y="106.0" width="1.4" height="0.9" fill="#3e0c2a"/><rect x="0.3" y="112.8" width="1.0" height="0.6" fill="#a82a34"/><rect x="15.6" y="80.3" width="1.4" height="0.9" fill="#d84a30"/><rect x="8.2" y="78.1" width="1.8" height="1.1" fill="#6a1434"/><rect x="9.7" y="92.2" width="1.4" height="0.9" fill="#d84a30"/><rect x="20.2" y="87.0" width="0.9" height="0.6" fill="#6a1434"/><rect x="9.3" y="93.8" width="1.1" height="0.7" fill="#a82a34"/><rect x="24.2" y="106.2" width="2.0" height="1.3" fill="#d84a30"/><rect x="11.4" y="138.7" width="2.0" height="1.3" fill="#d84a30"/><rect x="31.7" y="102.5" width="1.5" height="0.9" fill="#3e0c2a"/><rect x="7.3" y="109.8" width="1.2" height="0.7" fill="#d84a30"/><rect x="28.2" y="104.6" width="1.8" height="1.1" fill="#d84a30"/><rect x="6.2" y="135.4" width="1.0" height="0.6" fill="#a82a34"/><rect x="12.8" y="109.0" width="2.0" height="1.3" fill="#6a1434"/><rect x="20.6" y="74.1" width="1.3" height="0.8" fill="#3e0c2a"/><rect x="3.4" y="137.7" width="0.8" height="0.5" fill="#8a2030"/><rect x="0.1" y="86.2" width="2.0" height="1.2" fill="#3e0c2a"/><rect x="9.4" y="129.1" width="1.4" height="0.9" fill="#a82a34"/><rect x="17.7" y="91.3" width="1.3" height="0.8" fill="#3e0c2a"/><rect x="0.4" y="91.2" width="0.8" height="0.5" fill="#3e0c2a"/><rect x="1.1" y="139.7" width="1.1" height="0.7" fill="#8a2030"/><rect x="17.8" y="83.0" width="1.5" height="0.9" fill="#3e0c2a"/><rect x="8.4" y="128.8" width="0.8" height="0.5" fill="#d84a30"/><rect x="8.3" y="77.0" width="1.9" height="1.2" fill="#a82a34"/><rect x="5.7" y="133.8" width="1.5" height="0.9" fill="#8a2030"/><rect x="18.5" y="98.5" width="1.0" height="0.6" fill="#d84a30"/><rect x="24.7" y="119.1" width="0.9" height="0.6" fill="#8a2030"/><rect x="6.9" y="125.1" width="1.8" height="1.1" fill="#d84a30"/><rect x="31.9" y="103.9" width="1.5" height="1.0" fill="#6a1434"/><rect x="0.3" y="83.2" width="1.9" height="1.2" fill="#3e0c2a"/><rect x="17.6" y="128.6" width="1.1" height="0.7" fill="#8a2030"/><rect x="16.1" y="94.9" width="1.4" height="0.9" fill="#a82a34"/><rect x="19.6" y="92.5" width="0.9" height="0.6" fill="#d84a30"/><rect x="6.4" y="118.1" width="1.4" height="0.9" fill="#8a2030"/><rect x="17.1" y="123.7" width="1.0" height="0.7" fill="#3e0c2a"/><rect x="1.5" y="134.8" width="2.0" height="1.3" fill="#3e0c2a"/><rect x="0.5" y="100.2" width="2.0" height="1.3" fill="#6a1434"/><rect x="3.0" y="136.3" width="1.5" height="0.9" fill="#3e0c2a"/><rect x="6.6" y="76.3" width="2.1" height="1.3" fill="#3e0c2a"/><rect x="3.1" y="79.2" width="1.7" height="1.1" fill="#6a1434"/><rect x="1.2" y="120.1" width="1.6" height="1.0" fill="#a82a34"/><rect x="0.0" y="128.0" width="2.0" height="1.3" fill="#d84a30"/><rect x="7.6" y="119.7" width="1.4" height="0.9" fill="#3e0c2a"/><rect x="14.2" y="93.1" width="1.1" height="0.7" fill="#6a1434"/><rect x="1.0" y="137.2" width="1.7" height="1.1" fill="#6a1434"/><rect x="9.1" y="104.8" width="1.0" height="0.6" fill="#a82a34"/><rect x="15.7" y="77.6" width="1.2" height="0.7" fill="#6a1434"/><rect x="1.5" y="116.8" width="0.9" height="0.5" fill="#6a1434"/><rect x="6.0" y="137.4" width="1.8" height="1.1" fill="#3e0c2a"/><rect x="3.2" y="102.6" width="1.2" height="0.7" fill="#a82a34"/><rect x="1.7" y="82.7" width="1.3" height="0.8" fill="#6a1434"/><rect x="7.5" y="135.9" width="0.8" height="0.5" fill="#6a1434"/><rect x="2.3" y="98.5" width="1.1" height="0.7" fill="#3e0c2a"/></g>
 <!-- circles -->
 <ellipse cx="50" cy="110" rx="20" ry="6" fill="#a08050" opacity="0.5"/>
 <circle cx="47" cy="93" r="18.5" fill="#9a1818"/>
 <path d="M47,74.5 A18.5,18.5 0 0 1 65.5,93 L47,93 Z M47,93 L47,111.5 A18.5,18.5 0 0 1 28.5,93 Z" fill="#3a0a18"/>
 <ellipse cx="116" cy="28" rx="18" ry="5" fill="#a08070" opacity="0.6"/>
 <circle cx="116" cy="6" r="18.5" fill="#e24030"/><circle cx="116" cy="6" r="16.5" fill="#6a1030"/>
 <path d="M111,2 L113,14 M119,2 L121,14" stroke="#ff8030" stroke-width="2.5"/>
 <ellipse cx="212" cy="108" rx="22" ry="6" fill="#a08050" opacity="0.5"/>
 <circle cx="207" cy="91" r="19" fill="#e23a3a"/><circle cx="207" cy="91" r="17" fill="#5e0e2a"/>
 <rect x="201" y="86" width="11" height="9" fill="#f09040"/>
 <g stroke="#e06040" stroke-width="1.4" fill="none"><path d="M194,82 L197,79 L200,79"/><path d="M220,82 L217,79 L214,79"/><path d="M194,100 L197,103 L200,103"/><path d="M220,100 L217,103 L214,103"/></g>
 <!-- orange dots -->
 <g fill="#ff5a2a" filter="url(#gfb2)">
  <circle cx="103" cy="107" r="5"/><circle cx="136" cy="109" r="5"/><circle cx="90" cy="125" r="5"/><circle cx="114" cy="126" r="5"/><circle cx="123" cy="133" r="5"/><circle cx="152" cy="124" r="4.5"/><circle cx="58" cy="119" r="4"/>
 </g>
 <g fill="#ffd080"><circle cx="103" cy="107" r="1.5"/><circle cx="136" cy="109" r="1.5"/><circle cx="90" cy="125" r="1.5"/><circle cx="114" cy="126" r="1.5"/><circle cx="123" cy="133" r="1.5"/></g>
 <!-- gun / beam -->
 <path d="M70,90 L125,84" stroke="#40d090" stroke-width="2" stroke-dasharray="3 2" opacity="0.8"/>
 <rect x="124" y="80" width="28" height="6" fill="#4a3a80"/><rect x="128" y="82" width="10" height="2" fill="#40d090"/>
 <g fill="#fff" stroke="#8a3a6a" stroke-width="1"><path d="M47,72 L57,77 L54,82 Z"/><path d="M72,65 L80,71 L74,78 Z"/><path d="M78,95 L86,102 L77,103 Z"/><path d="M55,98 L50,106 L58,104 Z"/></g>
 <g fill="#8a5a4a"><rect x="150" y="90" width="6" height="2" transform="rotate(50 150 90)"/><rect x="162" y="94" width="6" height="2" transform="rotate(60 162 94)"/><rect x="182" y="74" width="8" height="2"/><rect x="172" y="102" width="8" height="2"/></g>
 <g font-family="Liberation Sans" font-weight="bold" fill="#9a6a72" font-size="11">
  <text x="96" y="40" transform="rotate(-6 96 40)">Float Text</text>
  <text x="28" y="128" transform="rotate(-6 28 128)">Everything</text>
  <text x="180" y="124" transform="rotate(-6 180 124)">Screenshake</text>
 </g>
 <text x="0" y="70" font-size="8" font-weight="bold" fill="#20a080" font-family="Liberation Sans">3</text>
</svg></div>

<!-- template card 4: space shooter -->
<div class="card" style="left:1033px;top:242px;width:246px;height:140px;background:#1a1a18">
<svg width="246" height="140" viewBox="0 0 246 140">
 <rect width="246" height="140" fill="#181816"/>
 <rect x="0" y="27.4" width="246" height="82.6" fill="#4a5236"/>
 <g fill="#4a5236"><rect x="0" y="12" width="246" height="1.4"/><rect x="0" y="17.9" width="246" height="1.7"/><rect x="0" y="22.4" width="246" height="2.9"/>
 <rect x="0" y="110.5" width="246" height="3.3"/><rect x="0" y="116" width="246" height="3"/><rect x="0" y="121" width="246" height="2.4"/></g>
 <g fill="#e4e8c4" font-family="Liberation Mono" font-weight="bold" font-size="9"><text x="9" y="14" textLength="24" lengthAdjust="spacingAndGlyphs">POW</text><text x="203" y="14" textLength="39" lengthAdjust="spacingAndGlyphs">CHARGE</text></g>
 <rect x="34.5" y="6" width="45" height="8.5" fill="none" stroke="#e4e8c4" stroke-width="1.5"/>
 <rect x="37" y="8.5" width="40" height="3.5" fill="#8e9866"/>
 <!-- player ship -->
 <g fill="#d4d8b0" stroke="#111" stroke-width="1.3">
  <path d="M24.5,48.3 H32 V52 H35.7 V58.6 H30 V55 H24.5 Z"/>
  <path d="M42,50 H49 V61 H45 V56 H42 Z"/>
  <path d="M50.6,56.7 H58 V60 H60.6 V66.7 H52 V62 H50.6 Z"/>
  <path d="M47,70.5 H54.5 V76.6 H47 Z"/>
  <path d="M42,77 H48.8 V83.5 H44 V80 H42 Z"/>
  <path d="M30,75 H35.7 V80 H32 V86 H26.4 V79 H30 Z"/>
  <path d="M20,62 H26.4 V73.5 H20 Z"/>
  <path d="M27.6,58.6 H46.3 V62 H49 V72 H46.3 V76 H27.6 Z"/>
 </g>
 <ellipse cx="40" cy="67" rx="2.8" ry="5" fill="#5a6440"/>
 <path d="M30,62 H38 V72 H30 Z" fill="#b8bc90"/>
 <!-- bullets -->
 <g fill="#b4bc88"><ellipse cx="83" cy="65" rx="6" ry="2.5"/><ellipse cx="83" cy="74" rx="6" ry="2.5"/><ellipse cx="111" cy="65" rx="6" ry="2.5"/><ellipse cx="111" cy="74" rx="6" ry="2.5"/><ellipse cx="139" cy="65" rx="6" ry="2.5"/><ellipse cx="139" cy="74" rx="6" ry="2.5"/></g>
 <!-- asteroids -->
 <g stroke="#181814" stroke-width="1.2">
  <ellipse cx="143" cy="37" rx="8.5" ry="7" fill="#96a070"/>
  <path d="M166,55 L180,52 L192,57 L197,70 L190,82 L176,84 L166,76 L164,64 Z" fill="#96a070"/>
  <circle cx="138" cy="94" r="9.5" fill="#96a070"/>
 </g>
 <path d="M180,64 L190,62 L190,70 L182,72 Z" fill="#6e7a4e"/>
 <path d="M208,75 L216,70 L224,74 L228,82 L224,92 L212,94 L206,86 Z" fill="#d0d4a8" stroke="#181814" stroke-width="1"/>
 <g fill="#b4bc88"><rect x="4" y="32" width="1.5" height="1.5"/><rect x="167" y="36" width="1.5" height="1.5"/><rect x="232" y="32" width="1.5" height="1.5"/><rect x="80" y="50" width="1.5" height="1.5"/><rect x="228" y="90" width="1.5" height="1.5"/><rect x="179" y="109" width="1.5" height="1.5"/><rect x="126" y="128" width="1.5" height="1.5"/><rect x="33" y="133" width="1.5" height="1.5"/><rect x="185" y="125" width="1.5" height="1.5"/></g>
</svg></div>

<div class="cap" style="left:250px;top:391px">Downhill bike physics demo</div>
<div class="cap" style="left:511px;top:391px">Space asteroids</div>
<div class="cap" style="left:772px;top:391px">Game feel demo</div>
<div class="cap" style="left:1033px;top:391px">Space shooter</div>
<svg width="0" height="0" style="position:absolute">
 <defs>
  <linearGradient id="tbg" x1="0" y1="0" x2="0" y2="1"><stop offset="0" stop-color="#3a80d2"/><stop offset="0.45" stop-color="#4274d0"/><stop offset="0.75" stop-color="#5a5cc6"/><stop offset="1" stop-color="#6a48bc"/></linearGradient>
  <g id="glogo">
   <path d="M213.5,13 C213,22 217,28.5 227,28.5 C233,28.5 237,27 240.5,25" fill="none" stroke="#fff" stroke-width="3.4"/>
   <path d="M242,8.6 L227,8.6 C221,8.6 219.5,12 219.5,15.5 C219.5,20 222,22.3 226.5,22.3 L233.5,22.3 L235.3,14.6 L226.5,14.6" fill="none" stroke="#fff" stroke-width="3.3"/>
  </g>
  <g id="tri"><path d="M179,0 L248,0 L248,68 Z" fill="#a010a6"/><use href="#glogo"/></g>
 </defs>
</svg>
<!-- tutorial 1: Layout -->
<div class="card" style="left:151px;top:478px;width:248px;height:140px">
<svg width="248" height="140" viewBox="0 0 248 140">
 <defs><pattern id="dirt" width="9" height="9" patternUnits="userSpaceOnUse" y="131"><rect width="9" height="9" fill="#94522a"/><rect x="1" y="1" width="4" height="3" fill="#c07040"/><rect x="5" y="5" width="3" height="3" fill="#b86a3a"/><rect x="0" y="5" width="2" height="2" fill="#3a1a0a"/><rect x="6" y="2" width="2" height="2" fill="#4a2210"/></pattern>
 <pattern id="grass" width="12" height="10" patternUnits="userSpaceOnUse" y="121"><rect width="12" height="10" fill="#187858"/><rect x="0" y="1" width="12" height="4" fill="#22b040"/><rect x="1" y="0" width="4" height="2" fill="#30d048"/><rect x="7" y="0" width="3" height="1.5" fill="#30c848"/><rect x="3" y="5" width="3" height="3" fill="#22a040"/><rect x="9" y="5" width="2" height="2" fill="#209a40"/></pattern></defs>
 <rect width="248" height="140" fill="url(#tbg)"/>
 <use href="#tri"/>
 <rect x="126" y="84" width="63" height="40" fill="#333438"/>
 <rect x="126" y="84" width="63" height="5" fill="#4a4ea0"/>
 <path d="M130,95 L185,95 M130,101 L185,101" stroke="#555" stroke-width="0.6"/>
 <rect x="133" y="46" width="50" height="38.5" fill="#d8d8d8" stroke="#555" stroke-width="0.6"/>
 <rect x="143" y="57" width="31" height="16" fill="#e8e8e8" stroke="#aaa" stroke-width="0.5"/>
 <path d="M151,61 L155,61 L158,63 L161,61 L165,61 L167,64 L158,72 L149,64 Z" fill="#b010b0"/>
 <rect x="133" y="81" width="10" height="4" fill="#444"/>
 <g transform="rotate(-10 181 47)"><rect x="170" y="39" width="23" height="16" rx="1.5" fill="#111"/><text x="174" y="52" font-size="12" font-weight="bold" fill="#f020a0" font-family="Liberation Sans">Hi</text></g>
 <rect x="0" y="121" width="248" height="10" fill="url(#grass)"/>
 <rect x="0" y="131" width="248" height="9" fill="url(#dirt)"/>
 <rect x="0" y="7" width="51" height="20" fill="#9c12a4"/>
 <text x="5.5" y="23.5" font-size="18.5" font-weight="bold" fill="#fff" font-family="Liberation Sans" textLength="39" lengthAdjust="spacingAndGlyphs">Intro</text>
 <rect x="0" y="27" width="105" height="39" fill="#080808"/>
 <text x="5.8" y="56.5" font-size="31" font-weight="bold" fill="#fff" font-family="Liberation Sans" textLength="93" lengthAdjust="spacingAndGlyphs">Layout</text>
</svg></div>

<!-- tutorial 2: Objects -->
<div class="card" style="left:412px;top:478px;width:248px;height:140px">
<svg width="248" height="140" viewBox="0 0 248 140">
 <defs><pattern id="brick" width="20" height="11" patternUnits="userSpaceOnUse" y="117.5"><rect width="20" height="11" fill="#6c6c86"/><rect x="0.8" y="0.7" width="18.4" height="4" fill="#a6a6be"/><rect x="0.8" y="0.7" width="18.4" height="1.2" fill="#d4d4e4"/><rect x="-9.2" y="6.2" width="18.4" height="4" fill="#9a9ab4"/><rect x="10.8" y="6.2" width="18.4" height="4" fill="#9a9ab4"/><rect x="10.8" y="6.2" width="18.4" height="1" fill="#c0c0d4"/><rect x="-9.2" y="6.2" width="18.4" height="1" fill="#c0c0d4"/></pattern></defs>
 <rect width="248" height="140" fill="url(#tbg)"/>
 <use href="#tri"/>
 <rect x="0" y="117.5" width="248" height="22.5" fill="url(#brick)"/>
 <rect x="0" y="129" width="248" height="11" fill="#5a5a74" opacity="0.55"/>
 <path d="M142,117.5 L146,108 L194,108 L198,117.5 Z" fill="#b8b8c8"/>
 <path d="M152,110 L168,102 L190,106 L186,112 L156,114 Z" fill="#7a4030"/>
 <path d="M154,106 L160,90 L166,96 L170,84 L176,98 L184,100 L180,110 L158,112 Z" fill="#e03a20"/>
 <path d="M162,100 L168,92 L174,102 L178,106 L164,108 Z" fill="#ff9a30"/>
 <path d="M164,86 L166,74 L170,82 Z" fill="#e03a20"/><path d="M172,94 L174,80 L178,92 Z" fill="#e03a20"/>
 <rect x="169" y="66" width="1.5" height="1.5" fill="#e03a20"/>
 <g><ellipse cx="186" cy="31" rx="5" ry="5" fill="#f0b030"/><path d="M180,26 L184,21 L186,27 M192,26 L188,21 L186,27" stroke="#fff" stroke-width="2.4" fill="none"/></g>
 <g><ellipse cx="134" cy="52" rx="4.5" ry="4.5" fill="#f0b030"/><path d="M128,47 L133,46 L134,48 M140,47 L135,46 L134,48" stroke="#fff" stroke-width="2" fill="none"/></g>
 <g><rect x="213" y="78" width="10" height="9" rx="2" fill="#30b8f0"/><path d="M214,77 L215,72 M222,77 L221,72" stroke="#fff" stroke-width="2"/></g>
 <rect x="0" y="6.6" width="51" height="20" fill="#9c12a4"/>
 <text x="5.2" y="23.5" font-size="18.5" font-weight="bold" fill="#fff" font-family="Liberation Sans" textLength="39" lengthAdjust="spacingAndGlyphs">Intro</text>
 <rect x="0" y="26.5" width="114" height="40.5" fill="#080808"/>
 <text x="5.9" y="56.7" font-size="31" font-weight="bold" fill="#fff" font-family="Liberation Sans" textLength="102" lengthAdjust="spacingAndGlyphs">Objects</text>
</svg></div>

<!-- tutorial 3: Events -->
<div class="card" style="left:673px;top:478px;width:248px;height:140px">
<svg width="248" height="140" viewBox="0 0 248 140">
 <rect width="248" height="140" fill="url(#tbg)"/>
 <use href="#tri"/>
 <g transform="translate(21 92) rotate(-30) scale(1.0)" fill="#4a7cd6"><rect x="-11" y="-10" width="22" height="21"/><rect x="-14" y="-4" width="3" height="9"/><rect x="11" y="-4" width="3" height="9"/><rect x="-10" y="-14" width="5" height="4"/><rect x="5" y="-14" width="5" height="4"/><rect x="-13" y="11" width="7" height="4"/><rect x="6" y="11" width="7" height="4"/><rect x="-5" y="-2" width="2.5" height="2" fill="#1e4a8a" opacity="0.7"/><rect x="3" y="-2" width="2.5" height="2" fill="#1e4a8a" opacity="0.7"/></g>
 <g transform="translate(67 85) rotate(-20) scale(1.0)" fill="#4690e0"><rect x="-11" y="-10" width="22" height="21"/><rect x="-14" y="-4" width="3" height="9"/><rect x="11" y="-4" width="3" height="9"/><rect x="-10" y="-14" width="5" height="4"/><rect x="5" y="-14" width="5" height="4"/><rect x="-13" y="11" width="7" height="4"/><rect x="6" y="11" width="7" height="4"/><rect x="-5" y="-2" width="2.5" height="2" fill="#1e4a8a" opacity="0.7"/><rect x="3" y="-2" width="2.5" height="2" fill="#1e4a8a" opacity="0.7"/></g>
 <g transform="translate(113 95) rotate(15) scale(1.0)" fill="#3ca2ea"><rect x="-11" y="-10" width="22" height="21"/><rect x="-14" y="-4" width="3" height="9"/><rect x="11" y="-4" width="3" height="9"/><rect x="-10" y="-14" width="5" height="4"/><rect x="5" y="-14" width="5" height="4"/><rect x="-13" y="11" width="7" height="4"/><rect x="6" y="11" width="7" height="4"/><rect x="-5" y="-2" width="2.5" height="2" fill="#1e4a8a" opacity="0.7"/><rect x="3" y="-2" width="2.5" height="2" fill="#1e4a8a" opacity="0.7"/></g>
 <g transform="translate(161 82) rotate(-35) scale(1.0)" fill="#32b0f0"><rect x="-11" y="-10" width="22" height="21"/><rect x="-14" y="-4" width="3" height="9"/><rect x="11" y="-4" width="3" height="9"/><rect x="-10" y="-14" width="5" height="4"/><rect x="5" y="-14" width="5" height="4"/><rect x="-13" y="11" width="7" height="4"/><rect x="6" y="11" width="7" height="4"/><rect x="-5" y="-2" width="2.5" height="2" fill="#1e4a8a" opacity="0.7"/><rect x="3" y="-2" width="2.5" height="2" fill="#1e4a8a" opacity="0.7"/></g>
 <g transform="translate(208 93) rotate(35) scale(1.0)" fill="#2cbaf4"><rect x="-11" y="-10" width="22" height="21"/><rect x="-14" y="-4" width="3" height="9"/><rect x="11" y="-4" width="3" height="9"/><rect x="-10" y="-14" width="5" height="4"/><rect x="5" y="-14" width="5" height="4"/><rect x="-13" y="11" width="7" height="4"/><rect x="6" y="11" width="7" height="4"/><rect x="-5" y="-2" width="2.5" height="2" fill="#1e4a8a" opacity="0.7"/><rect x="3" y="-2" width="2.5" height="2" fill="#1e4a8a" opacity="0.7"/></g>
 <g><rect x="112" y="18" width="9" height="10" rx="2" fill="#30b0f0"/><path d="M113,17 L112,13 M120,17 L121,13" stroke="#fff" stroke-width="1.8"/></g>
 <g><rect x="186" y="31" width="9" height="10" rx="2" fill="#30b0f0"/><path d="M187,30 L186,26 M194,30 L195,26" stroke="#fff" stroke-width="1.8"/></g>
 <rect x="0" y="115" width="248" height="25" fill="#f8dac8"/>
 <path d="M0,115 H248 V126 H236 V132 H222 V128 H206 V133 H190 V127 H172 V132 H158 V127 H140 V133 H126 V128 H110 V133 H94 V127 H78 V132 H62 V128 H46 V133 H30 V127 H14 V132 H0 Z" fill="#d8a074"/>
 <path d="M0,115 H248 V122 H236 V126 H222 V123 H206 V127 H190 V122 H172 V126 H158 V122 H140 V127 H126 V123 H110 V127 H94 V122 H78 V126 H62 V123 H46 V127 H30 V122 H14 V126 H0 Z" fill="#a8d03c"/>
 <rect x="0" y="7" width="51" height="20" fill="#9c12a4"/>
 <text x="5.4" y="23.5" font-size="18.5" font-weight="bold" fill="#fff" font-family="Liberation Sans" textLength="39" lengthAdjust="spacingAndGlyphs">Intro</text>
 <rect x="0" y="27" width="101" height="36" fill="#080808"/>
 <text x="5.4" y="55" font-size="31" font-weight="bold" fill="#fff" font-family="Liberation Sans" textLength="89.5" lengthAdjust="spacingAndGlyphs">Events</text>
</svg></div>

<!-- tutorial 4: Jumpstart -->
<div class="card" style="left:934px;top:478px;width:248px;height:140px">
<svg width="248" height="140" viewBox="0 0 248 140">
 <rect width="248" height="140" fill="url(#tbg)"/>
 <use href="#tri"/>
 <path d="M0,80 C15,74 30,74 45,80 C60,86 75,86 90,80 C105,74 120,74 135,80 C150,86 165,86 180,80 C195,74 210,74 225,80 C235,84 242,84 248,82 V140 H0 Z" fill="#6a9ce0"/>
 <path d="M0,80 C15,74 30,74 45,80 C60,86 75,86 90,80 C105,74 120,74 135,80 C150,86 165,86 180,80 C195,74 210,74 225,80 C235,84 242,84 248,82" fill="none" stroke="#4a7ad0" stroke-width="2"/>
 <g stroke="#48b8a4" stroke-width="5.5" stroke-linecap="round" fill="none">
  <path d="M9,124 C8,112 10,104 12,100"/><path d="M22,124 C20,110 24,100 22,94"/><path d="M32,124 C32,114 34,110 33,106"/>
  <path d="M135,124 C134,112 136,104 135,100"/><path d="M143,124 C142,110 146,98 144,91"/><path d="M156,124 C156,112 158,104 157,100"/>
  <path d="M193,124 C192,110 194,98 192,92"/><path d="M203,124 C202,104 206,92 202,82"/><path d="M214,124 C214,112 216,104 214,98"/>
 </g>
 <path d="M46,124 L56,104 L70,102 L74,124 Z" fill="#a8c4e0" opacity="0.8"/>
 <path d="M238,124 L242,102 L248,96 L248,124 Z" fill="#a8c4e0" opacity="0.8"/>
 <path d="M0,124 C40,118 80,120 120,124 C160,118 200,118 248,122 V140 H0 Z" fill="#8ca2b2"/>
 <circle cx="97" cy="90.5" r="5" fill="none" stroke="#e0ecf8" stroke-width="1.6"/>
 <circle cx="95.5" cy="109" r="3" fill="#e0ecf8"/>
 <path d="M101,118 L110,110 L118,114 L120,124 L112,132 L104,128 Z" fill="#30a8e8"/>
 <path d="M113,104 L117,106 L115,110 Z M122,112 L126,116 L120,118 Z" fill="#d8e0ec"/>
 <rect x="0" y="7" width="51" height="20" fill="#9c12a4"/>
 <text x="5.5" y="23.5" font-size="18.5" font-weight="bold" fill="#fff" font-family="Liberation Sans" textLength="39" lengthAdjust="spacingAndGlyphs">Intro</text>
 <rect x="0" y="27" width="150" height="40" fill="#080808"/>
 <text x="5.9" y="56.5" font-size="31" font-weight="bold" fill="#fff" font-family="Liberation Sans" textLength="137" lengthAdjust="spacingAndGlyphs">Jumpstart</text>
</svg></div>

<!-- tutorial 5: Variables (partial) -->
<div class="card" style="left:1195px;top:478px;width:84px;height:140px">
<svg width="84" height="140" viewBox="0 0 84 140">
 <rect width="84" height="140" fill="url(#tbg)"/>
 <g fill="none" stroke="#c8b8f0" stroke-width="1.5" opacity="0.5"><circle cx="36" cy="97" r="13"/><circle cx="43" cy="97" r="13"/><circle cx="50" cy="97" r="13"/></g>
 <g opacity="0.35" fill="#70c0b0"><ellipse cx="36" cy="104" rx="10" ry="12"/><ellipse cx="45" cy="104" rx="10" ry="12"/></g>
 <ellipse cx="56" cy="102" rx="11" ry="12" fill="#6cc8b0"/>
 <rect x="48" y="106" width="17" height="12" fill="#6cc8b0"/>
 <circle cx="58.3" cy="97" r="13.5" fill="none" stroke="#fff" stroke-width="1.8"/>
 <circle cx="53" cy="99" r="1.5" fill="#2a6a5a"/><circle cx="61" cy="99" r="1.5" fill="#2a6a5a"/>
 <text x="45" y="78.5" font-size="16" font-weight="bold" font-style="italic" fill="#fff" stroke="#222" stroke-width="2.2" paint-order="stroke" font-family="Liberation Sans" textLength="20" lengthAdjust="spacingAndGlyphs">+1</text>
 <rect x="0" y="122.7" width="84" height="17.3" fill="#86c426"/>
 <path d="M0,140 L8,132 L16,140 L24,132 L32,140 L40,132 L48,140 L56,132 L64,140 L72,132 L80,140 L84,136 V140 Z" fill="#d88a5a"/>
 <rect x="0" y="7" width="51" height="20" fill="#9c12a4"/>
 <text x="5.5" y="23.5" font-size="18.5" font-weight="bold" fill="#fff" font-family="Liberation Sans" textLength="39" lengthAdjust="spacingAndGlyphs">Intro</text>
 <rect x="0" y="27" width="84" height="35.6" fill="#080808"/>
 <text x="5.9" y="55" font-size="31" font-weight="bold" fill="#fff" font-family="Liberation Sans" textLength="124" lengthAdjust="spacingAndGlyphs">Variables</text>
</svg></div>
<!-- showcase 1: Blazing Inferno -->
<div class="card" style="left:151px;top:690px;width:248px;height:140px;background:#061030">
<svg width="248" height="140" viewBox="0 0 248 140">
 <defs>
  <radialGradient id="neb" cx="0.45" cy="0.35" r="0.6"><stop offset="0" stop-color="#12307a"/><stop offset="0.55" stop-color="#081848"/><stop offset="1" stop-color="#02061a"/></radialGradient>
  <filter id="sb2" x="-50%" y="-50%" width="200%" height="200%"><feGaussianBlur stdDeviation="2.2"/></filter>
  <filter id="sb1" x="-50%" y="-50%" width="200%" height="200%"><feGaussianBlur stdDeviation="0.9"/></filter>
 </defs>
 <rect width="248" height="140" fill="url(#neb)"/>
 <g stroke="#3060d0" stroke-width="0.8" fill="none" opacity="0.6">
  <path d="M60,10 C90,40 140,20 170,60 C190,90 160,120 120,130"/><path d="M100,0 C110,30 150,40 180,20"/><path d="M50,90 C80,70 130,90 160,110"/>
  <path d="M170,10 C200,40 210,90 200,140"/><path d="M120,40 C140,50 150,35 160,30"/><path d="M70,40 C90,60 110,50 130,70"/>
 </g>
 <g fill="#5a90ff" filter="url(#sb1)"><circle cx="112" cy="17" r="2"/><circle cx="163" cy="28" r="2"/><circle cx="92" cy="48" r="1.5"/></g>
 <rect x="0" y="0" width="46" height="140" fill="#2a2222"/>
 <g stroke="#5a3a2a" stroke-width="1" fill="none" opacity="0.8"><path d="M4,0 V140 M40,0 V140 M0,40 H46 M0,100 H46"/></g>
 <circle cx="37" cy="16" r="10" fill="#6a6a6a"/><circle cx="37" cy="16" r="7" fill="#3a3a3a"/>
 <circle cx="33" cy="122" r="10" fill="#6a6a6a"/><circle cx="33" cy="122" r="7" fill="#3a3a3a"/>
 <circle cx="24" cy="74" r="22" fill="none" stroke="#3c3e48" stroke-width="6"/>
 <circle cx="24" cy="74" r="16" fill="none" stroke="#2a3a5a" stroke-width="2"/>
 <circle cx="24" cy="74" r="13" fill="#14243e"/>
 <g fill="#a0d8f0"><rect x="16" y="57" width="5" height="2"/><rect x="24" y="56" width="5" height="2"/><rect x="16" y="89" width="5" height="2"/><rect x="24" y="90" width="5" height="2"/></g>
 <g stroke="#d8c030" stroke-width="1.3">
  <path d="M45,24 L54,26 M45,27 L54,29"/><path d="M80,31 L88,34 M79,34 L87,37"/><path d="M102,43 L110,46 M101,46 L109,49"/><path d="M131,56 L139,59 M130,59 L138,62"/>
  <path d="M133,75 L141,72 M133,78 L141,75"/><path d="M106,89 L114,86 M106,92 L114,89"/><path d="M85,99 L93,96 M85,102 L93,99"/><path d="M63,109 L71,106 M63,112 L71,109"/>
  <path d="M176,74 L184,77 M176,77 L184,80"/><path d="M199,82 L207,85 M199,85 L207,88"/><path d="M220,92 L228,95 M220,95 L228,98"/>
  <path d="M47,113 L56,111 M47,117 L56,115"/>
 </g>
 <g filter="url(#sb2)"><path d="M22,75 L172,64" stroke="#9ad0ff" stroke-width="11" stroke-linecap="round" opacity="0.55"/></g>
 <path d="M26,76 L170,64" stroke="#fff" stroke-width="7" stroke-linecap="round" filter="url(#sb1)"/>
 <g fill="#fff" filter="url(#sb1)"><ellipse cx="40" cy="75" rx="10" ry="5.5"/><ellipse cx="70" cy="72" rx="12" ry="5.5"/><ellipse cx="120" cy="68" rx="9" ry="5"/><ellipse cx="155" cy="65.5" rx="14" ry="5.5"/></g>
 <g fill="#1a5a20" stroke="#40e040" stroke-width="1.3"><ellipse cx="207" cy="29" rx="7" ry="4.5" transform="rotate(10 207 29)"/><ellipse cx="220" cy="37" rx="7" ry="4.5" transform="rotate(5 220 37)"/><ellipse cx="188" cy="61" rx="7" ry="4.5"/><ellipse cx="208" cy="60" rx="7" ry="4.5"/></g>
 <g stroke="#50c040" stroke-width="0.8" opacity="0.7"><path d="M214,29 L232,28 M228,37 L244,36 M195,61 L206,61 M215,60 L230,60"/></g>
 <g fill="#2a4458" opacity="0.8"><ellipse cx="78" cy="10" rx="9" ry="5"/><ellipse cx="192" cy="8" rx="9" ry="5"/><ellipse cx="186" cy="55" rx="12" ry="6"/><ellipse cx="207" cy="109" rx="9" ry="6"/><ellipse cx="248" cy="126" rx="6" ry="8"/></g>
 <g stroke="#c02020" stroke-width="0.8" fill="none"><path d="M170,20 C176,16 180,24 186,20 C192,16 196,24 202,20 C206,18 208,20 210,20"/><path d="M214,59 C220,55 224,63 230,59 C236,55 240,63 246,59"/><path d="M48,134 C54,130 58,138 64,134 C70,130 74,138 82,134"/></g>
 <text x="206" y="6" font-size="5" fill="#fff" font-family="Liberation Sans">Score: 1K</text>
</svg></div>

<!-- showcase 2: Floresia -->
<div class="card" style="left:412px;top:690px;width:248px;height:140px;background:#03041e">
<svg width="248" height="140" viewBox="0 0 248 140" shape-rendering="crispEdges">
 <rect width="248" height="140" fill="#03041e"/>
 <rect x="0" y="76" width="248" height="64" fill="#2e1e1a"/>
 <path d="M0,96 H24 V100 H36 V104 H70 V106 H248 V140 H0 Z" fill="#462820"/>
 <path d="M0,120 H18 V124 H52 V122 H72 V120 H98 V126 H106 V132 H150 V130 H190 V134 H210 V128 H248 V140 H0 Z" fill="#1e1614"/>
 <path d="M20,8 H46 V12 H56 V18 H62 V26 H66 V60 H60 V70 H50 V74 H20 V70 H10 V62 H6 V18 H12 V12 Z" fill="#072a10"/>
 <rect x="27" y="74" width="8" height="22" fill="#160806"/>
 <path d="M204,8 H230 V12 H240 V70 H234 V74 H204 V70 H194 V62 H188 V26 H194 V16 H200 V12 Z" fill="#072a10"/>
 <rect x="220" y="74" width="8" height="22" fill="#160806"/>
 <rect x="239" y="6" width="9" height="92" fill="#101818"/><rect x="239" y="92" width="8" height="34" fill="#000"/>
 <path d="M105,30 H150 V34 H157 V37 H163 V42 H168 V47 H173 V52 H177 V61 H181 V68 H185 V103 H66 V68 H69 V57 H73 V52 H77 V47 H82 V42 H87 V37 H93 V34 H105 Z" fill="#28581e"/>
 <path d="M122,81 H136 V84 H139 V103 H119 V84 H122 Z" fill="#8c8c8c"/>
 <rect x="133" y="93" width="3" height="2" fill="#e02020"/>
 <rect x="107" y="95" width="10" height="5" fill="#b01818"/><rect x="107" y="100" width="10" height="6" fill="#e8d0b0"/><rect x="108" y="106" width="8" height="8" fill="#1a3060"/><rect x="109" y="114" width="6" height="5" fill="#111"/>
 <rect x="212" y="95" width="12" height="5" fill="#2a4a3a"/><rect x="213" y="100" width="10" height="6" fill="#e8d0b0"/><rect x="214" y="106" width="8" height="7" fill="#1a3a2a"/><rect x="215" y="113" width="6" height="5" fill="#223"/>
 <rect x="4" y="18" width="5" height="45" fill="#20c030"/><rect x="11" y="18" width="4" height="45" fill="#d09020"/>
 <g fill="#aaa"><rect x="7" y="8" width="2" height="2"/><rect x="97" y="17" width="2" height="2"/><rect x="184" y="11" width="2" height="2"/></g>
</svg></div>

<!-- showcase 3: Baby Idol Girl -->
<div class="card" style="left:673px;top:690px;width:248px;height:140px">
<svg width="248" height="140" viewBox="0 0 248 140">
 <defs>
  <linearGradient id="bidg" x1="0" y1="0" x2="1" y2="1"><stop offset="0" stop-color="#f6c0ec"/><stop offset="0.45" stop-color="#fdeef4"/><stop offset="0.7" stop-color="#f4f4e0"/><stop offset="1" stop-color="#b8e0f4"/></linearGradient>
  <linearGradient id="bidg2" x1="0" y1="1" x2="0.5" y2="0.5"><stop offset="0" stop-color="#dcb0f2" stop-opacity="0.8"/><stop offset="1" stop-color="#dcb0f2" stop-opacity="0"/></linearGradient>
 </defs>
 <rect width="248" height="140" fill="url(#bidg)"/>
 <rect width="248" height="140" fill="url(#bidg2)"/>
 <!-- girl 1 -->
 <path d="M2,40 C5,15 40,8 60,20 C72,30 70,60 68,80 C72,100 60,110 50,100 L10,100 C0,100 -4,70 2,40 Z" fill="#2a2224"/>
 <path d="M4,30 L12,22 L16,36 Z M56,20 L62,16 L60,32 Z" fill="#f8f0f0" stroke="#333" stroke-width="0.8"/>
 <ellipse cx="38" cy="60" rx="25" ry="24" fill="#fbe8ec"/>
 <circle cx="26" cy="66" r="7.5" fill="#2a2a30"/><circle cx="50" cy="62" r="7.5" fill="#2a2a30"/>
 <circle cx="24" cy="63" r="2" fill="#fff"/><circle cx="48" cy="59" r="2" fill="#fff"/>
 <ellipse cx="38" cy="52" rx="9" ry="7" fill="#f4b8c8" opacity="0.6"/>
 <path d="M16,84 L58,80 L64,118 L20,122 Z" fill="#aac2e4"/>
 <path d="M32,84 L46,84 L46,118 L32,118 Z" fill="#fff"/>
 <path d="M30,122 L36,126 M46,122 L52,126" stroke="#e080a0" stroke-width="3"/>
 <!-- girl 2 -->
 <path d="M66,40 C70,30 100,26 112,40 C118,55 116,80 112,90 L70,92 C64,80 62,55 66,40 Z" fill="#70463e"/>
 <ellipse cx="94" cy="62" rx="17" ry="16" fill="#fae4e4"/>
 <g fill="#70a0e8"><circle cx="68" cy="46" r="3"/><circle cx="86" cy="39" r="2.5"/><circle cx="102" cy="42" r="2.5"/></g>
 <g fill="#f0a0a0"><circle cx="76" cy="42" r="2.5"/><circle cx="96" cy="38" r="2.5"/><circle cx="110" cy="46" r="2.5"/></g>
 <path d="M80,84 L108,82 L110,100 L82,102 Z" fill="#f4c8d0"/>
 <!-- small orange girl -->
 <circle cx="94" cy="106" r="11" fill="#f07830"/>
 <ellipse cx="95" cy="112" rx="7" ry="6" fill="#fbe4e0"/>
 <path d="M88,118 L100,118 L100,130 L88,130 Z" fill="#f8d8d8"/>
 <!-- girl 3 -->
 <path d="M132,28 C135,18 148,16 156,24 C166,14 186,18 192,30 C198,45 194,70 188,82 L136,82 C128,70 128,42 132,28 Z" fill="#7c5048"/>
 <path d="M156,16 L164,20 L172,14 L170,24 L160,26 Z" fill="#c8dc70"/>
 <ellipse cx="162" cy="66" rx="24" ry="22" fill="#fbe8e4"/>
 <path d="M138,56 C150,40 172,38 186,56 L186,46 C176,30 150,30 138,46 Z" fill="#7c5048"/>
 <circle cx="151" cy="70" r="8" fill="#30303a" stroke="#c07070" stroke-width="1"/><circle cx="174" cy="70" r="8" fill="#30303a" stroke="#c07070" stroke-width="1"/>
 <circle cx="149" cy="67" r="2" fill="#fff"/><circle cx="172" cy="67" r="2" fill="#fff"/>
 <ellipse cx="160" cy="82" rx="3" ry="2" fill="#e06070"/>
 <path d="M144,86 L176,86 L178,106 L146,106 Z" fill="#e8f0b0"/>
 <!-- text -->
 <text x="94" y="110" font-size="36" font-weight="bold" fill="#fff" stroke="#7ccce6" stroke-width="1.2" paint-order="stroke" font-family="Liberation Serif" textLength="74" lengthAdjust="spacingAndGlyphs">Baby</text>
 <text x="120" y="119" font-size="19" font-weight="bold" fill="#f49ac4" font-family="Liberation Sans" textLength="34" lengthAdjust="spacingAndGlyphs">idol</text>
 <!-- penguin -->
 <ellipse cx="182" cy="100" rx="12" ry="14" fill="#4a90d8"/>
 <ellipse cx="182" cy="104" rx="8" ry="9" fill="#fff"/>
 <circle cx="178" cy="96" r="2" fill="#222"/><circle cx="186" cy="96" r="2" fill="#222"/>
 <!-- app icon -->
 <rect x="156" y="112" width="22" height="24" rx="3" fill="#f8d4dc"/>
 <ellipse cx="167" cy="122" rx="8" ry="9" fill="#f0d090"/>
 <path d="M150,124 L156,128 L150,132 Z" fill="#30a0f0"/>
 <!-- girl 4 -->
 <path d="M192,40 C194,18 230,14 244,30 C250,45 248,80 246,100 L196,100 C188,80 188,55 192,40 Z" fill="#2e2424"/>
 <ellipse cx="222" cy="74" rx="20" ry="22" fill="#d49272"/>
 <path d="M198,44 C206,32 236,30 246,44 L246,56 C236,44 212,44 200,58 Z" fill="#2e2424"/>
 <path d="M208,74 L214,74 M228,72 L234,72" stroke="#222" stroke-width="3"/>
 <path d="M218,86 C221,90 226,90 228,86 Z" fill="#a02020"/>
 <path d="M196,92 L240,92 L242,118 L198,118 Z" fill="#d84448"/>
 <path d="M212,92 L228,92 L228,116 L212,116 Z" fill="#2a1c1c"/>
 <path d="M202,118 L236,118 L234,132 L204,132 Z" fill="#3a2828"/>
</svg></div>

<!-- showcase 4: Baby Thief -->
<div class="card" style="left:934px;top:690px;width:248px;height:140px">
<svg width="248" height="140" viewBox="0 0 248 140">
 <defs>
  <linearGradient id="btsky" x1="0" y1="0" x2="0.6" y2="1"><stop offset="0" stop-color="#2a80d8"/><stop offset="0.5" stop-color="#8cc4ee"/><stop offset="1" stop-color="#e8f4fc"/></linearGradient>
  <radialGradient id="btsun" cx="0.5" cy="0.4" r="0.5"><stop offset="0" stop-color="#fff" stop-opacity="0.9"/><stop offset="1" stop-color="#fff" stop-opacity="0"/></radialGradient>
  <linearGradient id="btgr" x1="0" y1="0" x2="0" y2="1"><stop offset="0" stop-color="#58c028"/><stop offset="1" stop-color="#2e9a18"/></linearGradient>
  <filter id="cl" x="-50%" y="-50%" width="200%" height="200%"><feGaussianBlur stdDeviation="3"/></filter>
 </defs>
 <rect width="248" height="140" fill="url(#btsky)"/>
 <g fill="#fff" opacity="0.85" filter="url(#cl)">
  <ellipse cx="60" cy="40" rx="30" ry="14"/><ellipse cx="150" cy="60" rx="40" ry="14"/><ellipse cx="90" cy="80" rx="35" ry="12"/><ellipse cx="185" cy="75" rx="25" ry="18"/><ellipse cx="30" cy="10" rx="20" ry="8"/><ellipse cx="130" cy="90" rx="40" ry="12"/>
 </g>
 <rect x="80" y="30" width="80" height="60" fill="url(#btsun)"/>
 <path d="M0,118 C60,116 150,115 248,118 V140 H0 Z" fill="url(#btgr)"/>
 <!-- tree -->
 <rect x="40" y="80" width="1.5" height="38" fill="#666"/>
 <ellipse cx="44" cy="68" rx="9" ry="16" fill="#3a9a40"/>
 <!-- rock -->
 <path d="M186,0 L248,0 L248,140 L225,140 L172,36 L174,20 Z" fill="#7c7c7c"/>
 <path d="M232,0 L248,0 L248,128 L214,74 L204,58 L214,30 Z" fill="#a4a4a4"/>
 <circle cx="219" cy="34" r="26" fill="#e0e0e0" stroke="#000" stroke-width="3"/>
 <path d="M208,40 C208,26 220,22 230,30 C236,38 234,52 226,56 L210,56 C206,50 207,46 208,40 Z" fill="#000"/>
 <path d="M214,38 L222,34 M216,48 C220,50 228,48 230,44" stroke="#d0b060" stroke-width="1.6" fill="none"/>
 <!-- cage -->
 <path d="M92,0 L92,38 L150,38 L148,0" fill="#fff" stroke="#000" stroke-width="1.2"/>
 <path d="M110,0 L110,36 M128,0 L128,36 M92,14 L150,14 M92,26 L150,26" stroke="#333" stroke-width="0.8"/>
 <path d="M92,36 L151,36 L149,43 L94,43 Z" fill="#9a9a9a" stroke="#000" stroke-width="0.8"/>
 <!-- character -->
 <path d="M0,48 L36,50 L36,80 L30,96 L24,98 L0,96 Z" fill="#28a028" stroke="#000" stroke-width="2"/>
 <path d="M2,96 L26,96 L18,140 L0,140 Z" fill="#000"/>
 <path d="M0,130 L14,132 L14,140 L0,140 Z" fill="#c07020"/>
 <path d="M8,26 C10,18 30,16 40,24 L42,42 C36,50 14,50 8,44 Z" fill="#f0c860" stroke="#000" stroke-width="2.2"/>
 <path d="M6,28 C6,14 36,12 42,26 L40,30 C30,20 14,22 6,32 Z" fill="#000"/>
 <path d="M16,36 L28,38" stroke="#000" stroke-width="2"/>
 <path d="M26,96 C30,94 40,96 42,102 L36,104 C32,102 28,102 26,100 Z" fill="#f0c860" stroke="#000" stroke-width="1.5"/>
 <!-- texts -->
 <g fill="#e8b094" font-family="Liberation Sans">
  <text x="68" y="112" font-size="21" textLength="48" lengthAdjust="spacingAndGlyphs">baby</text>
  <text x="116" y="120" font-size="26" textLength="56" lengthAdjust="spacingAndGlyphs">ThieF</text>
  <text x="60" y="142" font-size="14" font-weight="bold" textLength="122" lengthAdjust="spacingAndGlyphs">by mahdi ghasemi</text>
 </g>
</svg></div>

<!-- showcase 5: Brick Drop -->
<div class="card" style="left:1195px;top:690px;width:84px;height:140px;background:#000">
 <div class="a" style="left:40px;top:57px;width:17px;height:7px;background:#18e030"></div>
</div>

<div class="cap" style="left:151px;top:839px;letter-spacing:-0.12px">Blazing Inferno of Space</div>
<div class="cap" style="left:412px;top:839px">Floresia I : Intemporel</div>
<div class="cap" style="left:673px;top:839px">Baby Idol Girl</div>
<div class="cap" style="left:934px;top:839px">Baby Thief</div>
<div class="cap" style="left:1195px;top:839px">Brick Drop</div>
<!-- footer left -->
<svg class="a" style="left:22px;top:900px" width="24" height="24" viewBox="0 0 24 24"><path d="M21 6h-2v9H6v2c0 .55.45 1 1 1h11l4 4V7c0-.55-.45-1-1-1zm-4 6V3c0-.55-.45-1-1-1H3c-.55 0-1 .45-1 1v14l4-4h10c.55 0 1-.45 1-1z" fill="#000"/></svg>
<div class="t" style="left:50px;top:906px;font-size:13px;letter-spacing:-0.55px;color:#111">COMMUNITY FORUMS</div>
<svg class="a" style="left:196px;top:900px" width="24" height="24" viewBox="0 0 24 24"><path d="M12 2C6.48 2 2 6.48 2 12s4.48 10 10 10 10-4.48 10-10S17.52 2 12 2zm1 17h-2v-2h2v2zm2.07-7.75l-.9.92C13.45 12.9 13 13.5 13 15h-2v-.5c0-1.1.45-2.1 1.17-2.83l1.24-1.26c.37-.36.59-.86.59-1.41 0-1.1-.9-2-2-2s-2 .9-2 2H8c0-2.21 1.79-4 4-4s4 1.79 4 4c0 .88-.36 1.68-.93 2.25z" fill="#000"/></svg>
<div class="t" style="left:224px;top:906px;font-size:13px;letter-spacing:-0.5px;color:#111">HELP AND DOCUMENTATION</div>
<!-- social icons -->
<svg class="a" style="left:1132px;top:902px" width="23" height="23" viewBox="0 0 23 23">
 <rect x="0.2" y="0" width="22" height="22" rx="3.5" fill="#000"/>
 <text x="5.8" y="8.9" font-size="9.6" font-weight="bold" fill="#fff" font-family="Liberation Sans" textLength="10.8" lengthAdjust="spacingAndGlyphs">You</text>
 <rect x="3.3" y="10" width="16.2" height="10.3" rx="2.5" fill="#fff"/>
 <text x="4.6" y="18.6" font-size="8" font-weight="bold" fill="#000" font-family="Liberation Sans" textLength="13.6" lengthAdjust="spacingAndGlyphs">Tube</text>
</svg>
<svg class="a" style="left:1180px;top:902px" width="24" height="26" viewBox="0 0 24 26">
 <path d="M3,0.3 H19 C20.5,0.3 21.5,1.3 21.5,2.8 V24.5 L17.5,21 H3 C1.5,21 0.5,20 0.5,18.5 V2.8 C0.5,1.3 1.5,0.3 3,0.3 Z" fill="#000"/>
 <g transform="translate(11.6 11.3) scale(1.25) translate(-11.3 -10.3)"> <path d="M7.2,6.3 C8.6,5.8 9.6,5.7 10.2,5.9 L10.5,6.6 C10.9,6.5 11.5,6.5 12,6.6 L12.3,5.9 C13,5.7 14,5.8 15.4,6.3 C16.8,8.5 17.4,11 17.2,13.3 C16.2,14.1 15.2,14.6 14.2,14.8 L13.6,13.8 C13,14 12,14.1 11.3,14.1 C10.6,14.1 9.6,14 9,13.8 L8.4,14.8 C7.4,14.6 6.4,14.1 5.4,13.3 C5.2,11 5.8,8.5 7.2,6.3 Z" fill="#fff"/>
 <circle cx="9.3" cy="11.1" r="1.2" fill="#000"/><circle cx="13.3" cy="11.1" r="1.2" fill="#000"/></g>
</svg>
<svg class="a" style="left:1227px;top:902px" width="22" height="22" viewBox="0 0 22 22">
 <rect x="0" y="0.2" width="21" height="21" rx="3.5" fill="#000"/>
 <ellipse cx="10.5" cy="13" rx="6.2" ry="4.3" fill="#fff"/>
 <circle cx="4.6" cy="10.5" r="1.5" fill="#fff"/><circle cx="16.4" cy="10.5" r="1.5" fill="#fff"/>
 <path d="M10.6,8.8 L12,3.5 L15.8,4.3" stroke="#fff" stroke-width="0.9" fill="none"/>
 <circle cx="16.3" cy="4.4" r="1.2" fill="#fff"/>
 <circle cx="8.5" cy="12.4" r="0.9" fill="#000"/><circle cx="12.5" cy="12.4" r="0.9" fill="#000"/>
 <path d="M8.7,14.8 C9.8,15.5 11.2,15.5 12.3,14.8" stroke="#000" stroke-width="0.6" fill="none"/>
</svg>
<svg class="a" style="left:1272px;top:902px" width="21" height="21" viewBox="0 0 21 21">
 <rect x="0" y="0.4" width="20.3" height="20.5" rx="3.2" fill="#000"/>
 <path d="M17.2,6.2 C16.7,6.4 16.2,6.6 15.6,6.6 C16.2,6.3 16.6,5.7 16.8,5.1 C16.3,5.4 15.7,5.6 15.1,5.8 C14.6,5.2 13.9,4.9 13.1,4.9 C11.6,4.9 10.4,6.1 10.4,7.6 C10.4,7.8 10.4,8 10.5,8.2 C8.2,8.1 6.2,7 4.9,5.3 C4.6,5.7 4.5,6.2 4.5,6.7 C4.5,7.6 5,8.5 5.7,9 C5.3,9 4.8,8.8 4.5,8.7 C4.5,10 5.4,11.1 6.6,11.4 C6.2,11.5 5.8,11.5 5.4,11.4 C5.7,12.5 6.8,13.3 8,13.3 C6.9,14.1 5.6,14.6 4.2,14.6 C4,14.6 3.7,14.6 3.5,14.6 C4.7,15.4 6.2,15.8 7.7,15.8 C12.7,15.8 15.4,11.7 15.4,8.1 L15.4,7.8 C16.1,7.4 16.7,6.8 17.2,6.2 Z" fill="#fff"/>
</svg>
<svg class="a" style="left:1316px;top:902px" width="21" height="21" viewBox="0 0 21 21">
 <rect x="0.5" y="0.4" width="20.4" height="20.5" rx="3.2" fill="#000"/>
 <path d="M14.4,20.9 V13.4 H16.9 L17.3,10.5 H14.4 V8.7 C14.4,7.9 14.7,7.3 15.8,7.3 H17.4 V4.7 C17.1,4.7 16.2,4.6 15.2,4.6 C13,4.6 11.5,5.9 11.5,8.4 V10.5 H9 V13.4 H11.5 V20.9 Z" fill="#fff"/>
</svg>
<svg class="a" style="left:1359px;top:900px" width="24" height="24" viewBox="0 0 24 24"><path d="M11.99 2C6.47 2 2 6.48 2 12s4.47 10 9.99 10C17.52 22 22 17.52 22 12S17.52 2 11.99 2zm6.93 6h-2.950c-.32-1.25-.78-2.45-1.380-3.56 1.840.63 3.370 1.910 4.330 3.560zM12 4.04c.83 1.2 1.48 2.53 1.91 3.96h-3.820c.430-1.430 1.080-2.760 1.910-3.960zM4.26 14C4.1 13.36 4 12.69 4 12s.1-1.36.26-2h3.380c-.080.660-.140 1.320-.140 2 0 .68.06 1.34.14 2H4.26zm.82 2h2.950c.320 1.250.780 2.450 1.380 3.560-1.840-.630-3.370-1.900-4.330-3.560zm2.950-8H5.08c.96-1.66 2.49-2.93 4.33-3.56C8.81 5.55 8.35 6.75 8.03 8zM12 19.96c-.83-1.2-1.48-2.53-1.91-3.96h3.820c-.430 1.430-1.080 2.760-1.910 3.960zM14.34 14H9.66c-.09-.66-.16-1.32-.16-2 0-.68.07-1.35.16-2h4.680c.090.650.160 1.320.160 2 0 .68-.07 1.34-.16 2zm.25 5.56c.6-1.11 1.06-2.31 1.38-3.56h2.950c-.960 1.650-2.490 2.930-4.330 3.560zM16.36 14c.08-.66.14-1.32.14-2 0-.68-.06-1.34-.14-2h3.380c.160.640.260 1.310.260 2s-.1 1.36-.26 2h-3.38z" fill="#000"/></svg>
<div class="t" style="left:1387px;top:907px;font-size:12.5px;letter-spacing:-0.8px;color:#111">EN</div>
<div class="a" style="left:1348px;top:890px;width:67px;height:39px;border:2px solid #f00"></div>
<!-- red arrow -->
<svg class="a" style="left:0;top:0;pointer-events:none" width="1454" height="963" viewBox="0 0 1454 963">
 <path d="M1134.2,703.5 L1340,865" stroke="#f00" stroke-width="2.2"/>
 <path d="M1354.5,876.5 L1333,869.5 L1344,856 Z" fill="#f00"/>
</svg>
</body></html>
